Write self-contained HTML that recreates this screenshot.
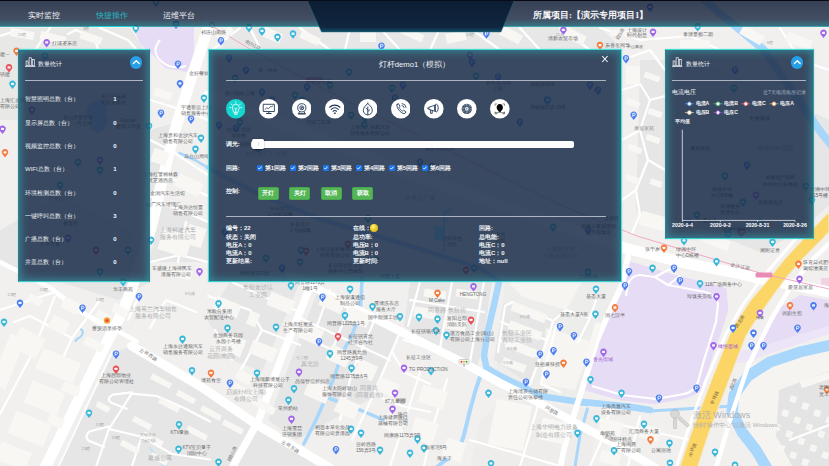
<!DOCTYPE html>
<html lang="zh"><head><meta charset="utf-8"><title>smart pole</title>
<style>
html,body{margin:0;padding:0;background:#f1f0ee;}
body{width:829px;height:466px;position:relative;overflow:hidden;font-family:"Liberation Sans",sans-serif;color:#fff;}
#map{position:absolute;left:0;top:0;}

.abs{position:absolute;}
#topbar{position:absolute;left:0;top:0;width:829px;height:27px;background:linear-gradient(180deg,rgba(18,30,56,.83) 0%,rgba(20,34,60,.79) 70%,rgba(24,100,118,.86) 100%);border-top:1px solid #05080f;box-sizing:border-box;}
#topline{position:absolute;left:0;top:26.4px;width:829px;height:1px;background:rgba(70,200,210,.55);}
#trap{position:absolute;left:0;top:0;}
.tab{position:absolute;top:9.5px;height:11px;line-height:11px;font-size:8.3px;color:#f1f3f6;white-space:nowrap;}
.tab.on{color:#25b9c2;}
#tabline{position:absolute;left:89px;top:25.8px;width:47px;height:1.4px;background:#19d3d3;}
#proj{position:absolute;left:533px;top:9.5px;height:11px;line-height:11px;font-size:8.85px;font-weight:bold;font-family:"Liberation Serif",serif;color:#f4f6f8;white-space:nowrap;}
.panel{position:absolute;box-sizing:border-box;background:rgba(26,44,72,.855);border-top:1.3px solid #46dcd6;border-bottom:1.3px solid #35cfcf;box-shadow:inset 0 0 8px 1.5px rgba(52,198,205,.5), 0 0 1.5px rgba(70,225,225,.6);}
#pl{left:18px;top:48.5px;width:132px;height:233.5px;border-left:1px solid rgba(50,170,180,.55);border-right:1px solid rgba(50,170,180,.45);}
#pc{left:208.4px;top:48.5px;width:414px;height:233.5px;border-left:1.5px solid #3fe3de;border-right:1.5px solid #43e6e0;}
#pr{left:664.6px;top:48.5px;width:149px;height:190.5px;border-left:1px solid rgba(50,170,180,.55);border-right:1px solid rgba(50,190,195,.7);}
.hr{position:absolute;height:1.1px;background:rgba(205,211,220,.78);}
.t6{position:absolute;font-size:6px;line-height:8px;height:8px;white-space:nowrap;color:#f4f6f9;}
.b{font-weight:bold;}
.ptitle{position:absolute;font-size:6px;line-height:8px;height:8px;white-space:nowrap;color:#f2f4f7;}
.up{position:absolute;width:12.6px;height:12.6px;border-radius:50%;background:#279fe6;}
.ic{position:absolute;width:19.6px;height:19.6px;top:99.2px;}
.ck{position:absolute;width:5.6px;height:5.6px;border-radius:1px;background:#1c74ea;top:165.2px;}
.ck svg{position:absolute;left:0;top:0;}
.gbtn{position:absolute;top:187.3px;width:21.3px;height:12.8px;border-radius:1.6px;background:#55b657;border:0.5px solid #49a64b;box-sizing:border-box;color:#fff;font-size:5.8px;line-height:11.8px;text-align:center;font-weight:bold;white-space:nowrap;}
.lg{position:absolute;font-size:5.2px;line-height:7px;height:7px;color:#f3f5f8;font-weight:bold;white-space:nowrap;}
.xl{position:absolute;font-size:5.2px;line-height:7px;height:7px;width:30px;text-align:center;color:#fff;font-weight:bold;white-space:nowrap;top:221.6px;}

</style></head><body>
<svg id="map" width="829" height="466" viewBox="0 0 829 466"><rect x="0" y="0" width="829" height="466" fill="#f1f0ee"/>
<polygon points="114,352 135,345 210,392 300,452 320,466 59,466" fill="#e6e6e6" />
<polygon points="60,196 130,230 150,282 118,300 60,282 0,262 0,230" fill="#e6e6e6" />
<polygon points="230,282 300,282 262,372 232,360 206,318" fill="#e6e6e6" />
<polygon points="318,290 400,332 372,398 296,440 268,420" fill="#e6e6e6" />
<polygon points="410,282 492,282 482,348 476,372 404,326" fill="#e6e6e6" />
<polygon points="505,282 618,282 580,398 528,392 496,372" fill="#ededeb" />
<polygon points="503,303 553,321 529,384 494,360" fill="#e6e6e6" />
<polygon points="546,328 592,342 575,390 540,384" fill="#f6f5f2" />
<polygon points="508,282 582,282 566,310 523,297" fill="#f6f5f2" />
<polygon points="150,130 178,122 165,175 150,215" fill="#e6e6e6" />
<polygon points="160,205 208,222 208,262 150,262" fill="#e6e6e6" />
<polygon points="636,210 700,228 760,252 800,232 829,205 829,120 700,60 640,60" fill="#e6e6e6" />
<polygon points="779,390 829,371 829,466 792,466 776,436" fill="#e4e4e4" />
<polygon points="748,366 829,338 829,371 779,390 776,436 792,466 770,466 745,430 738,400" fill="#f5f4f1" />
<polygon points="0,28 130,28 150,60 150,120 0,120" fill="#e8e8e7" />
<polygon points="228,27 600,27 622,49 222,49" fill="#e7e7e7" />
<polygon points="505,400 600,410 590,466 470,466 480,420" fill="#eeedeb" />
<polygon points="629.9,261.2 674.3,274.8 720.6,286.3 726.4,288.3 728.4,309.5 722.6,328.8 712.9,355.9 703.3,386.8 699.4,392.6 685.9,398.4 655,404.2 620.2,400.3 585.4,390.6 583.5,388.7 589.3,367.5 600.9,336.6 612.5,305.7 624,270.9" fill="#e6dcf5" />
<polygon points="135,30 138,27 194,27 194,62 186,72 165,68 155,57 140,44" fill="#e6dcf5" />
<polygon points="776,310 800,295 829,300 829,326 756,348 762,332" fill="#e6dcf5" />
<polygon points="821,278 829,278 829,286 821,286" fill="#f1d3e3" />
<polygon points="733,352 755,348 829,326 829,334 745,362 728,364" fill="#ece4f7" />
<polyline points="704,0 763,49 820,131 835,150" fill="none" stroke="#a9d6fb" stroke-width="8" stroke-linecap="round" stroke-linejoin="round" />
<polyline points="835,344 800,352 770,362 748,376 734,395 732,412 742,432 756,450 768,470" fill="none" stroke="#a9d6fb" stroke-width="11" stroke-linecap="round" stroke-linejoin="round" />
<polyline points="575,404 600,405 650,411 700,408 732,406" fill="none" stroke="#a9d6fb" stroke-width="3" stroke-linecap="round" stroke-linejoin="round" />
<polyline points="499,282 494,305 487.4,333 484,356 486.5,367.8 500,376 517.2,384.3 540.8,396.1 571.5,400.8 630,406.7 650,410" fill="none" stroke="#a9d6fb" stroke-width="6.5" stroke-linecap="round" stroke-linejoin="round" />
<polyline points="483,370 480.6,375 475,392 470,410.3 464,435 458,452 443,462 436,468" fill="none" stroke="#a9d6fb" stroke-width="4" stroke-linecap="round" stroke-linejoin="round" />
<polyline points="587.4,408.8 580,435 574.8,468" fill="none" stroke="#a9d6fb" stroke-width="3" stroke-linecap="round" stroke-linejoin="round" />
<polyline points="362,278 361,300 359.6,316 352,335 341.8,353.6 335,375 326.6,396 316,420 303.8,444" fill="none" stroke="#a9d6fb" stroke-width="3.5" stroke-linecap="round" stroke-linejoin="round" />
<polyline points="326,397 360,410 402.6,427.8" fill="none" stroke="#a9d6fb" stroke-width="3.5" stroke-linecap="round" stroke-linejoin="round" />
<polyline points="179.4,153 195,160 207.5,167.5" fill="none" stroke="#a9d6fb" stroke-width="2.5" stroke-linecap="round" stroke-linejoin="round" />
<polyline points="207.5,167.5 260,195 320,219 420,249 480,268 497,280" fill="none" stroke="#a9d6fb" stroke-width="4.5" stroke-linecap="round" stroke-linejoin="round" />
<path d="M92,104 L100,101 L106,106 L104,113 L107,120 L104,128 L97,132 L91,128 L92,120 L87,114 L88,108 Z" fill="#a9d6fb" stroke="#a9d6fb" stroke-width="2" stroke-linejoin="round"/>
<path d="M80.5,329 q3,1 2,5 q-1,3 -4,4 q-2,1 -3,3" fill="none" stroke="#a9d6fb" stroke-width="2.2" stroke-linecap="round"/>
<polyline points="150,448 160,462 170,470" fill="none" stroke="#bfe2fb" stroke-width="2" stroke-linecap="round" stroke-linejoin="round" />
<polyline points="0,310 53,292.7" fill="none" stroke="#ffffff" stroke-width="2.2" stroke-linecap="round" stroke-linejoin="round" />
<polyline points="54.7,296.7 33,352 0,414" fill="none" stroke="#ffffff" stroke-width="2.2" stroke-linecap="round" stroke-linejoin="round" />
<polyline points="57,295 110,330" fill="none" stroke="#ffffff" stroke-width="2.2" stroke-linecap="round" stroke-linejoin="round" />
<polyline points="14,322 30,316 72,338 62,360" fill="none" stroke="#ffffff" stroke-width="2.2" stroke-linecap="round" stroke-linejoin="round" />
<polyline points="72,338 100,300" fill="none" stroke="#ffffff" stroke-width="2.2" stroke-linecap="round" stroke-linejoin="round" />
<polyline points="86,316 108,330" fill="none" stroke="#ffffff" stroke-width="2.2" stroke-linecap="round" stroke-linejoin="round" />
<polyline points="150,328 166,300 196,312" fill="none" stroke="#ffffff" stroke-width="2.2" stroke-linecap="round" stroke-linejoin="round" />
<polyline points="139,296 128,320" fill="none" stroke="#ffffff" stroke-width="2.2" stroke-linecap="round" stroke-linejoin="round" />
<polyline points="131.7,393.6 157,396 184,408 210,421.5" fill="none" stroke="#ffffff" stroke-width="2.2" stroke-linecap="round" stroke-linejoin="round" />
<polyline points="131.7,393.6 108.9,429 96.3,466" fill="none" stroke="#ffffff" stroke-width="2.2" stroke-linecap="round" stroke-linejoin="round" />
<polyline points="108.9,429 141.8,436.7 172,454 210,459.5" fill="none" stroke="#ffffff" stroke-width="2.2" stroke-linecap="round" stroke-linejoin="round" />
<polyline points="141.8,436.7 132,466" fill="none" stroke="#ffffff" stroke-width="2.2" stroke-linecap="round" stroke-linejoin="round" />
<polyline points="208,296 250,310 262,330 240,372" fill="none" stroke="#ffffff" stroke-width="2.2" stroke-linecap="round" stroke-linejoin="round" />
<polyline points="262,330 300,345" fill="none" stroke="#ffffff" stroke-width="2.2" stroke-linecap="round" stroke-linejoin="round" />
<polyline points="215,330 232,360" fill="none" stroke="#ffffff" stroke-width="2.2" stroke-linecap="round" stroke-linejoin="round" />
<polyline points="232,282 262,296 300,312" fill="none" stroke="#ffffff" stroke-width="2.2" stroke-linecap="round" stroke-linejoin="round" />
<polyline points="330,290 312,340" fill="none" stroke="#ffffff" stroke-width="2.2" stroke-linecap="round" stroke-linejoin="round" />
<polyline points="352,300 330,356" fill="none" stroke="#ffffff" stroke-width="2.2" stroke-linecap="round" stroke-linejoin="round" />
<polyline points="378,312 352,372 340,420" fill="none" stroke="#ffffff" stroke-width="2.2" stroke-linecap="round" stroke-linejoin="round" />
<polyline points="300,318 390,360" fill="none" stroke="#ffffff" stroke-width="2.2" stroke-linecap="round" stroke-linejoin="round" />
<polyline points="322,345 372,368" fill="none" stroke="#ffffff" stroke-width="2.2" stroke-linecap="round" stroke-linejoin="round" />
<polyline points="400,332 372,398 352,440" fill="none" stroke="#ffffff" stroke-width="2.2" stroke-linecap="round" stroke-linejoin="round" />
<polyline points="392,352 404,372 430,384" fill="none" stroke="#ffffff" stroke-width="2.2" stroke-linecap="round" stroke-linejoin="round" />
<polyline points="382,398 402,406 430,412" fill="none" stroke="#ffffff" stroke-width="2.2" stroke-linecap="round" stroke-linejoin="round" />
<polyline points="420,282 408,326" fill="none" stroke="#ffffff" stroke-width="2.2" stroke-linecap="round" stroke-linejoin="round" />
<polyline points="452,282 440,348" fill="none" stroke="#ffffff" stroke-width="2.2" stroke-linecap="round" stroke-linejoin="round" />
<polyline points="484,282 470,362" fill="none" stroke="#ffffff" stroke-width="2.2" stroke-linecap="round" stroke-linejoin="round" />
<polyline points="410,300 484,312" fill="none" stroke="#ffffff" stroke-width="2.2" stroke-linecap="round" stroke-linejoin="round" />
<polyline points="404,340 470,362" fill="none" stroke="#ffffff" stroke-width="2.2" stroke-linecap="round" stroke-linejoin="round" />
<polyline points="498,352 505,306 512,302 553,321 548,338 530,384" fill="none" stroke="#ffffff" stroke-width="2.2" stroke-linecap="round" stroke-linejoin="round" />
<polyline points="501,322 546,340" fill="none" stroke="#ffffff" stroke-width="2.2" stroke-linecap="round" stroke-linejoin="round" />
<polyline points="499,340 540,357" fill="none" stroke="#ffffff" stroke-width="2.2" stroke-linecap="round" stroke-linejoin="round" />
<polyline points="553,321 566,310 590,318" fill="none" stroke="#ffffff" stroke-width="2.2" stroke-linecap="round" stroke-linejoin="round" />
<polyline points="556,326 541,384 560,392" fill="none" stroke="#ffffff" stroke-width="2.2" stroke-linecap="round" stroke-linejoin="round" />
<polyline points="596,300 590,318 578,342" fill="none" stroke="#ffffff" stroke-width="2.2" stroke-linecap="round" stroke-linejoin="round" />
<polyline points="420,372 405,420 390,466" fill="none" stroke="#ffffff" stroke-width="2.2" stroke-linecap="round" stroke-linejoin="round" />
<polyline points="447,380 432,430 424,466" fill="none" stroke="#ffffff" stroke-width="2.2" stroke-linecap="round" stroke-linejoin="round" />
<polyline points="540,398 528,440 520,466" fill="none" stroke="#ffffff" stroke-width="2.2" stroke-linecap="round" stroke-linejoin="round" />
<polyline points="600,444 590,466" fill="none" stroke="#ffffff" stroke-width="2.2" stroke-linecap="round" stroke-linejoin="round" />
<polyline points="610,410 600,444" fill="none" stroke="#ffffff" stroke-width="2.2" stroke-linecap="round" stroke-linejoin="round" />
<polyline points="640,416 628,466" fill="none" stroke="#ffffff" stroke-width="2.2" stroke-linecap="round" stroke-linejoin="round" />
<polyline points="598,420 690,440" fill="none" stroke="#ffffff" stroke-width="2.2" stroke-linecap="round" stroke-linejoin="round" />
<polyline points="470,440 560,466" fill="none" stroke="#ffffff" stroke-width="2.2" stroke-linecap="round" stroke-linejoin="round" />
<polyline points="0,36 18,30 30,34" fill="none" stroke="#ffffff" stroke-width="2.2" stroke-linecap="round" stroke-linejoin="round" />
<polyline points="50.7,27 36,49" fill="none" stroke="#ffffff" stroke-width="2.2" stroke-linecap="round" stroke-linejoin="round" />
<polyline points="68,34 76,30 94,38 98,49" fill="none" stroke="#ffffff" stroke-width="2.2" stroke-linecap="round" stroke-linejoin="round" />
<polyline points="100,28 128,40 136,49" fill="none" stroke="#ffffff" stroke-width="2.2" stroke-linecap="round" stroke-linejoin="round" />
<polyline points="212,50 240,28" fill="none" stroke="#ffffff" stroke-width="2.2" stroke-linecap="round" stroke-linejoin="round" />
<polyline points="250,28 262,52" fill="none" stroke="#ffffff" stroke-width="2.2" stroke-linecap="round" stroke-linejoin="round" />
<polyline points="300,28 330,50" fill="none" stroke="#ffffff" stroke-width="2.2" stroke-linecap="round" stroke-linejoin="round" />
<polyline points="350,28 345,50" fill="none" stroke="#ffffff" stroke-width="2.2" stroke-linecap="round" stroke-linejoin="round" />
<polyline points="380,28 400,50" fill="none" stroke="#ffffff" stroke-width="2.2" stroke-linecap="round" stroke-linejoin="round" />
<polyline points="440,28 430,50" fill="none" stroke="#ffffff" stroke-width="2.2" stroke-linecap="round" stroke-linejoin="round" />
<polyline points="470,28 500,50" fill="none" stroke="#ffffff" stroke-width="2.2" stroke-linecap="round" stroke-linejoin="round" />
<polyline points="520,28 540,50" fill="none" stroke="#ffffff" stroke-width="2.2" stroke-linecap="round" stroke-linejoin="round" />
<polyline points="560,28 590,50" fill="none" stroke="#ffffff" stroke-width="2.2" stroke-linecap="round" stroke-linejoin="round" />
<polyline points="600,28 640,40 690,36 720,50" fill="none" stroke="#ffffff" stroke-width="2.2" stroke-linecap="round" stroke-linejoin="round" />
<polyline points="622,60 650,50 665,70" fill="none" stroke="#ffffff" stroke-width="2.2" stroke-linecap="round" stroke-linejoin="round" />
<polyline points="780,28 800,60 829,70" fill="none" stroke="#ffffff" stroke-width="2.2" stroke-linecap="round" stroke-linejoin="round" />
<polyline points="150,100 176,108 208,120" fill="none" stroke="#ffffff" stroke-width="2.2" stroke-linecap="round" stroke-linejoin="round" />
<polyline points="150,140 170,150 208,175" fill="none" stroke="#ffffff" stroke-width="2.2" stroke-linecap="round" stroke-linejoin="round" />
<polyline points="150,196 180,210 208,222" fill="none" stroke="#ffffff" stroke-width="2.2" stroke-linecap="round" stroke-linejoin="round" />
<polyline points="165,175 208,196" fill="none" stroke="#ffffff" stroke-width="2.2" stroke-linecap="round" stroke-linejoin="round" />
<polyline points="150,262 180,255 208,262" fill="none" stroke="#ffffff" stroke-width="2.2" stroke-linecap="round" stroke-linejoin="round" />
<polyline points="186,222 178,262" fill="none" stroke="#ffffff" stroke-width="2.2" stroke-linecap="round" stroke-linejoin="round" />
<polyline points="622,90 640,84 650,100 640,130 648,160 636,190 640,215 632,233" fill="none" stroke="#ffffff" stroke-width="2.2" stroke-linecap="round" stroke-linejoin="round" />
<polyline points="650,100 665,96" fill="none" stroke="#ffffff" stroke-width="2.2" stroke-linecap="round" stroke-linejoin="round" />
<polyline points="648,160 665,170" fill="none" stroke="#ffffff" stroke-width="2.2" stroke-linecap="round" stroke-linejoin="round" />
<polyline points="622,140 640,130" fill="none" stroke="#ffffff" stroke-width="2.2" stroke-linecap="round" stroke-linejoin="round" />
<polyline points="622,200 636,190" fill="none" stroke="#ffffff" stroke-width="2.2" stroke-linecap="round" stroke-linejoin="round" />
<polyline points="790,440 829,425" fill="none" stroke="#ffffff" stroke-width="2.2" stroke-linecap="round" stroke-linejoin="round" />
<polyline points="208,27 204,40 191,79 175,130 161,185 152,225 132,288 122,313 104,348 45,468" fill="none" stroke="#ffffff" stroke-width="11" stroke-linecap="round" stroke-linejoin="round" />
<polyline points="112,352 58,468" fill="none" stroke="#ffffff" stroke-width="1.6" stroke-linecap="round" stroke-linejoin="round" />
<polyline points="0,262 50.7,288 83.6,313.6 114,328.8 136.8,341.5" fill="none" stroke="#ffffff" stroke-width="4.5" stroke-linecap="round" stroke-linejoin="round" />
<polyline points="131.7,346 200,386 255.7,424 311.5,457 330,468" fill="none" stroke="#ffffff" stroke-width="9" stroke-linecap="round" stroke-linejoin="round" />
<polyline points="312,282 284,351 258,421.5 232,468" fill="none" stroke="#ffffff" stroke-width="7.5" stroke-linecap="round" stroke-linejoin="round" />
<polyline points="290,275 310,285.4 370,316 408.6,335.6 464,363 500,383 529,397.3 571.5,420.9 611.6,442.1 630,452.8 656,468" fill="none" stroke="#ffffff" stroke-width="8.3" stroke-linecap="round" stroke-linejoin="round" />
<polyline points="628.6,254 622,285 610,310 597,340 585,380 572.3,420 565,445 560,468" fill="none" stroke="#ffffff" stroke-width="5.8" stroke-linecap="round" stroke-linejoin="round" />
<polyline points="208,96 300,130 400,170 520,212 625,248 637,251 688.6,263.9 740,273.7 757,278 783,283 835,293" fill="none" stroke="#ffffff" stroke-width="11" stroke-linecap="round" stroke-linejoin="round" />
<polyline points="835,238 810,262 790,288 772,318 748,366 730,420 716,468" fill="none" stroke="#ffffff" stroke-width="4.5" stroke-linecap="round" stroke-linejoin="round" />
<polyline points="798,236 762,278 742,306 726,334 706,380 688,430 676,468" fill="none" stroke="#ffffff" stroke-width="3" stroke-linecap="round" stroke-linejoin="round" />
<path d="M626,296 L628,284 Q631,276 640,275 L655,277 L668,285 L700,291 Q716,293 718,304 L716,322 L704,360 L698,382 Q694,392 684,394 L656,399 L622,395 L592,386" fill="none" stroke="#fff" stroke-width="2.2" stroke-linejoin="round"/>
<polyline points="655,277 672,268" fill="none" stroke="#ffffff" stroke-width="2" stroke-linecap="round" stroke-linejoin="round" />
<polyline points="668,285 680,276" fill="none" stroke="#ffffff" stroke-width="2" stroke-linecap="round" stroke-linejoin="round" />
<path d="M131.7,392.3 L113,394.6 Q105.5,398.7 111.4,402.7 L126.6,408.8 M108.9,426.5 L90,431.2 Q83.5,436.5 88.7,440.7 L103.9,446.8" fill="none" stroke="#fff" stroke-width="2.2" stroke-linecap="round"/>
<path d="M160,40 Q150,52 162,62 Q172,70 186,66" fill="none" stroke="#fff" stroke-width="2"/>
<polygon points="829,211.6 802,240.3 785.9,257.5 768.7,279 750.5,300.4 736.5,321.8 729,336 710.6,382 691.4,432.4 680,466 679,470 697,470 698,466 709,432.4 728.3,382 746,336 754.8,321.8 769.8,300.4 785.2,279 804,257.5 821.3,240.3 829,232" fill="#fbd566" stroke="#f3ead6" stroke-width="1.2" stroke-linejoin="round"/>
<polyline points="212,26 255.7,52.6 346.8,100.7 560,205 637,236 760,273 829,289" fill="none" stroke="#f0a0c0" stroke-width="0.9" stroke-linecap="round" stroke-linejoin="round" />
<rect x="755.5" y="272.6" width="17" height="4.8" rx="1.5" fill="#e98bb4"/>
<rect x="306" y="77" width="17" height="5" rx="1.5" fill="#e98bb4"/>
<rect x="37.8" y="354.9" width="40.5" height="21.6" rx="0.6" fill="#f8f7f4" transform="rotate(22 58.05 365.7)"/>
<rect x="27.1" y="386" width="35" height="24" rx="0.6" fill="#f8f7f4" transform="rotate(22 44.6 398)"/>
<rect x="10.7" y="417" width="38" height="24" rx="0.6" fill="#f8f7f4" transform="rotate(22 29.7 429)"/>
<rect x="-2.5" y="446.5" width="32" height="19" rx="0.6" fill="#f8f7f4" transform="rotate(22 13.5 456)"/>
<rect x="0" y="334.6" width="16" height="54" rx="0.6" fill="#f8f7f4" transform="rotate(22 8 361.6)"/>
<rect x="62" y="384" width="18" height="10" rx="0.6" fill="#f8f7f4" transform="rotate(22 71 389)"/>
<rect x="48" y="416" width="16" height="10" rx="0.6" fill="#f8f7f4" transform="rotate(22 56 421)"/>
<rect x="50" y="318" width="18" height="14" rx="0.6" fill="#f8f7f4" transform="rotate(28 59 325)"/>
<rect x="14" y="332" width="28" height="22" rx="0.6" fill="#f8f7f4" transform="rotate(28 28 343)"/>
<rect x="28" y="296" width="14" height="8" rx="0.6" fill="#f8f7f4" transform="rotate(28 35 300)"/>
<rect x="96" y="312" width="14" height="8" rx="0.6" fill="#f8f7f4" transform="rotate(28 103 316)"/>
<rect x="112" y="306" width="16" height="9" rx="0.6" fill="#f8f7f4" transform="rotate(28 120 310.5)"/>
<rect x="62" y="300" width="18" height="12" rx="0.6" fill="#f8f7f4" transform="rotate(28 71 306)"/>
<rect x="84" y="340" width="20" height="9" rx="0.6" fill="#f8f7f4" transform="rotate(28 94 344.5)"/>
<rect x="150" y="378" width="22" height="6" rx="0.6" fill="#f8f7f4" transform="rotate(28 161 381)"/>
<rect x="176" y="394" width="20" height="6" rx="0.6" fill="#f8f7f4" transform="rotate(28 186 397)"/>
<rect x="158" y="402" width="22" height="6" rx="0.6" fill="#f8f7f4" transform="rotate(28 169 405)"/>
<rect x="132" y="420" width="20" height="6" rx="0.6" fill="#f8f7f4" transform="rotate(28 142 423)"/>
<rect x="120" y="444" width="20" height="6" rx="0.6" fill="#f8f7f4" transform="rotate(28 130 447)"/>
<rect x="142" y="436" width="22" height="6" rx="0.6" fill="#f8f7f4" transform="rotate(28 153 439)"/>
<rect x="200" y="410" width="22" height="6" rx="0.6" fill="#f8f7f4" transform="rotate(28 211 413)"/>
<rect x="186" y="430" width="22" height="6" rx="0.6" fill="#f8f7f4" transform="rotate(28 197 433)"/>
<rect x="150" y="456" width="18" height="6" rx="0.6" fill="#f8f7f4" transform="rotate(28 159 459)"/>
<rect x="222" y="424" width="22" height="6" rx="0.6" fill="#f8f7f4" transform="rotate(28 233 427)"/>
<rect x="96" y="404" width="14" height="6" rx="0.6" fill="#f8f7f4" transform="rotate(28 103 407)"/>
<rect x="214" y="300" width="26" height="14" rx="0.6" fill="#f8f7f4" transform="rotate(22 227 307)"/>
<rect x="248" y="312" width="10" height="14" rx="0.6" fill="#f8f7f4" transform="rotate(22 253 319)"/>
<rect x="268" y="296" width="26" height="14" rx="0.6" fill="#f8f7f4" transform="rotate(22 281 303)"/>
<rect x="222" y="336" width="22" height="18" rx="0.6" fill="#f8f7f4" transform="rotate(22 233 345)"/>
<rect x="250" y="344" width="26" height="14" rx="0.6" fill="#f8f7f4" transform="rotate(22 263 351)"/>
<rect x="320" y="296" width="24" height="14" rx="0.6" fill="#f8f7f4" transform="rotate(24 332 303)"/>
<rect x="346" y="310" width="24" height="14" rx="0.6" fill="#f8f7f4" transform="rotate(24 358 317)"/>
<rect x="300" y="326" width="22" height="16" rx="0.6" fill="#f8f7f4" transform="rotate(24 311 334)"/>
<rect x="328" y="348" width="22" height="16" rx="0.6" fill="#f8f7f4" transform="rotate(24 339 356)"/>
<rect x="356" y="362" width="20" height="16" rx="0.6" fill="#f8f7f4" transform="rotate(24 366 370)"/>
<rect x="306" y="382" width="24" height="18" rx="0.6" fill="#f8f7f4" transform="rotate(24 318 391)"/>
<rect x="336" y="400" width="22" height="16" rx="0.6" fill="#f8f7f4" transform="rotate(24 347 408)"/>
<rect x="376" y="380" width="22" height="14" rx="0.6" fill="#f8f7f4" transform="rotate(24 387 387)"/>
<rect x="384" y="416" width="20" height="16" rx="0.6" fill="#f8f7f4" transform="rotate(24 394 424)"/>
<rect x="424" y="290" width="22" height="8" rx="0.6" fill="#f8f7f4" transform="rotate(8 435 294)"/>
<rect x="456" y="290" width="22" height="8" rx="0.6" fill="#f8f7f4" transform="rotate(8 467 294)"/>
<rect x="414" y="308" width="22" height="10" rx="0.6" fill="#f8f7f4" transform="rotate(8 425 313)"/>
<rect x="446" y="316" width="20" height="14" rx="0.6" fill="#f8f7f4" transform="rotate(8 456 323)"/>
<rect x="511" y="308" width="36" height="9" rx="0.6" fill="#f8f7f4" transform="rotate(21 529 312.5)"/>
<rect x="508" y="326" width="34" height="9" rx="0.6" fill="#f8f7f4" transform="rotate(21 525 330.5)"/>
<rect x="505" y="344" width="32" height="9" rx="0.6" fill="#f8f7f4" transform="rotate(21 521 348.5)"/>
<rect x="502" y="361" width="24" height="8" rx="0.6" fill="#f8f7f4" transform="rotate(21 514 365)"/>
<rect x="590" y="322" width="6" height="40" rx="0.6" fill="#f8f7f4" transform="rotate(16 593 342)"/>
<rect x="232" y="388" width="24" height="8" rx="0.6" fill="#f8f7f4" transform="rotate(30 244 392)"/>
<rect x="252" y="402" width="24" height="8" rx="0.6" fill="#f8f7f4" transform="rotate(30 264 406)"/>
<rect x="236" y="372" width="16" height="10" rx="0.6" fill="#f8f7f4" transform="rotate(30 244 377)"/>
<rect x="420" y="388" width="26" height="18" rx="0.6" fill="#f8f7f4" transform="rotate(18 433 397)"/>
<rect x="412" y="420" width="24" height="22" rx="0.6" fill="#f8f7f4" transform="rotate(18 424 431)"/>
<rect x="444" y="440" width="20" height="20" rx="0.6" fill="#f8f7f4" transform="rotate(18 454 450)"/>
<rect x="492" y="402" width="36" height="46" rx="0.6" fill="#f8f7f4" transform="rotate(12 510 425)"/>
<rect x="540" y="420" width="26" height="22" rx="0.6" fill="#f8f7f4" transform="rotate(12 553 431)"/>
<rect x="600" y="420" width="22" height="14" rx="0.6" fill="#f8f7f4" transform="rotate(14 611 427)"/>
<rect x="640" y="426" width="20" height="14" rx="0.6" fill="#f8f7f4" transform="rotate(14 650 433)"/>
<rect x="600" y="452" width="20" height="12" rx="0.6" fill="#f8f7f4" transform="rotate(14 610 458)"/>
<rect x="10" y="30" width="24" height="8" rx="0.6" fill="#f8f7f4" transform="rotate(10 22 34)"/>
<rect x="40" y="34" width="26" height="8" rx="0.6" fill="#f8f7f4" transform="rotate(14 53 38)"/>
<rect x="80" y="34" width="22" height="8" rx="0.6" fill="#f8f7f4" transform="rotate(18 91 38)"/>
<rect x="216" y="30" width="18" height="8" rx="0.6" fill="#f8f7f4" transform="rotate(-30 225 34)"/>
<rect x="262" y="30" width="20" height="10" rx="0.6" fill="#f8f7f4" transform="rotate(24 272 35)"/>
<rect x="300" y="34" width="20" height="8" rx="0.6" fill="#f8f7f4" transform="rotate(24 310 38)"/>
<rect x="360" y="30" width="16" height="12" rx="0.6" fill="#f8f7f4" transform="rotate(0 368 36)"/>
<rect x="400" y="30" width="24" height="8" rx="0.6" fill="#f8f7f4" transform="rotate(24 412 34)"/>
<rect x="446" y="32" width="20" height="10" rx="0.6" fill="#f8f7f4" transform="rotate(-12 456 37)"/>
<rect x="500" y="30" width="22" height="10" rx="0.6" fill="#f8f7f4" transform="rotate(28 511 35)"/>
<rect x="560" y="30" width="26" height="10" rx="0.6" fill="#f8f7f4" transform="rotate(28 573 35)"/>
<rect x="610" y="30" width="22" height="6" rx="0.6" fill="#f8f7f4" transform="rotate(0 621 33)"/>
<rect x="680" y="40" width="30" height="8" rx="0.6" fill="#f8f7f4" transform="rotate(0 695 44)"/>
<rect x="740" y="30" width="24" height="10" rx="0.6" fill="#f8f7f4" transform="rotate(30 752 35)"/>
<rect x="786" y="36" width="26" height="10" rx="0.6" fill="#f8f7f4" transform="rotate(20 799 41)"/>
<rect x="154" y="90" width="18" height="8" rx="0.6" fill="#f8f7f4" transform="rotate(18 163 94)"/>
<rect x="152" y="150" width="16" height="14" rx="0.6" fill="#f8f7f4" transform="rotate(18 160 157)"/>
<rect x="176" y="178" width="26" height="14" rx="0.6" fill="#f8f7f4" transform="rotate(26 189 185)"/>
<rect x="160" y="232" width="30" height="22" rx="0.6" fill="#f8f7f4" transform="rotate(18 175 243)"/>
<rect x="186" y="226" width="18" height="20" rx="0.6" fill="#f8f7f4" transform="rotate(18 195 236)"/>
<rect x="170" y="268" width="22" height="10" rx="0.6" fill="#f8f7f4" transform="rotate(18 181 273)"/>
<rect x="626" y="66" width="14" height="18" rx="0.6" fill="#f8f7f4" transform="rotate(0 633 75)"/>
<rect x="644" y="74" width="16" height="6" rx="0.6" fill="#f8f7f4" transform="rotate(20 652 77)"/>
<rect x="626" y="100" width="14" height="6" rx="0.6" fill="#f8f7f4" transform="rotate(20 633 103)"/>
<rect x="648" y="110" width="14" height="6" rx="0.6" fill="#f8f7f4" transform="rotate(20 655 113)"/>
<rect x="628" y="146" width="14" height="6" rx="0.6" fill="#f8f7f4" transform="rotate(20 635 149)"/>
<rect x="650" y="180" width="12" height="6" rx="0.6" fill="#f8f7f4" transform="rotate(20 656 183)"/>
<rect x="626" y="176" width="12" height="6" rx="0.6" fill="#f8f7f4" transform="rotate(20 632 179)"/>
<rect x="646" y="136" width="14" height="6" rx="0.6" fill="#f8f7f4" transform="rotate(20 653 139)"/>
<rect x="640" y="216" width="40" height="14" rx="0.6" fill="#f8f7f4" transform="rotate(16 660 223)"/>
<rect x="700" y="236" width="30" height="10" rx="0.6" fill="#f8f7f4" transform="rotate(22 715 241)"/>
<rect x="790" y="396" width="6.5" height="6.5" rx="0.6" fill="#f7f6f3" transform="rotate(20 793.25 399.25)"/>
<rect x="802" y="403" width="6.5" height="6.5" rx="0.6" fill="#f7f6f3" transform="rotate(20 805.25 406.25)"/>
<rect x="814" y="410" width="6.5" height="6.5" rx="0.6" fill="#f7f6f3" transform="rotate(20 817.25 413.25)"/>
<rect x="826" y="417" width="6.5" height="6.5" rx="0.6" fill="#f7f6f3" transform="rotate(20 829.25 420.25)"/>
<rect x="782" y="410" width="6.5" height="6.5" rx="0.6" fill="#f7f6f3" transform="rotate(20 785.25 413.25)"/>
<rect x="794" y="417" width="6.5" height="6.5" rx="0.6" fill="#f7f6f3" transform="rotate(20 797.25 420.25)"/>
<rect x="806" y="424" width="6.5" height="6.5" rx="0.6" fill="#f7f6f3" transform="rotate(20 809.25 427.25)"/>
<rect x="818" y="431" width="6.5" height="6.5" rx="0.6" fill="#f7f6f3" transform="rotate(20 821.25 434.25)"/>
<rect x="774" y="424" width="6.5" height="6.5" rx="0.6" fill="#f7f6f3" transform="rotate(20 777.25 427.25)"/>
<rect x="786" y="431" width="6.5" height="6.5" rx="0.6" fill="#f7f6f3" transform="rotate(20 789.25 434.25)"/>
<rect x="798" y="438" width="6.5" height="6.5" rx="0.6" fill="#f7f6f3" transform="rotate(20 801.25 441.25)"/>
<rect x="810" y="445" width="6.5" height="6.5" rx="0.6" fill="#f7f6f3" transform="rotate(20 813.25 448.25)"/>
<rect x="822" y="452" width="6.5" height="6.5" rx="0.6" fill="#f7f6f3" transform="rotate(20 825.25 455.25)"/>
<rect x="778" y="445" width="6.5" height="6.5" rx="0.6" fill="#f7f6f3" transform="rotate(20 781.25 448.25)"/>
<rect x="790" y="452" width="6.5" height="6.5" rx="0.6" fill="#f7f6f3" transform="rotate(20 793.25 455.25)"/>
<rect x="802" y="459" width="6.5" height="6.5" rx="0.6" fill="#f7f6f3" transform="rotate(20 805.25 462.25)"/>
<rect x="800" y="376" width="34" height="7" rx="0.6" fill="#f7f6f3" transform="rotate(-18 817 379.5)"/>
<g transform="translate(139 296.5)"><path d="M0,5 L-2,2.4 A3.3,3.3 0 1 1 2,2.4 Z" fill="#4a7df0"/><path d="M-0.9,1.8 V-1.8 H0.5 A1.1,1.1 0 0 1 0.5,0.4 H-0.9" fill="none" stroke="#fff" stroke-width="0.8"/></g>
<g transform="translate(82.5 308)"><path d="M0,5 L-2,2.4 A3.3,3.3 0 1 1 2,2.4 Z" fill="#4a7df0"/><path d="M-0.9,1.8 V-1.8 H0.5 A1.1,1.1 0 0 1 0.5,0.4 H-0.9" fill="none" stroke="#fff" stroke-width="0.8"/></g>
<g transform="translate(116 354)"><path d="M0,5 L-2,2.4 A3.3,3.3 0 1 1 2,2.4 Z" fill="#4a7df0"/><path d="M-0.9,1.8 V-1.8 H0.5 A1.1,1.1 0 0 1 0.5,0.4 H-0.9" fill="none" stroke="#fff" stroke-width="0.8"/></g>
<g transform="translate(230 383)"><path d="M0,5 L-2,2.4 A3.3,3.3 0 1 1 2,2.4 Z" fill="#4a7df0"/><path d="M-0.9,1.8 V-1.8 H0.5 A1.1,1.1 0 0 1 0.5,0.4 H-0.9" fill="none" stroke="#fff" stroke-width="0.8"/></g>
<g transform="translate(322.5 297)"><path d="M0,5 L-2,2.4 A3.3,3.3 0 1 1 2,2.4 Z" fill="#4a7df0"/><path d="M-0.9,1.8 V-1.8 H0.5 A1.1,1.1 0 0 1 0.5,0.4 H-0.9" fill="none" stroke="#fff" stroke-width="0.8"/></g>
<g transform="translate(319 341.5)"><path d="M0,5 L-2,2.4 A3.3,3.3 0 1 1 2,2.4 Z" fill="#4a7df0"/><path d="M-0.9,1.8 V-1.8 H0.5 A1.1,1.1 0 0 1 0.5,0.4 H-0.9" fill="none" stroke="#fff" stroke-width="0.8"/></g>
<g transform="translate(336 449.5)"><path d="M0,5 L-2,2.4 A3.3,3.3 0 1 1 2,2.4 Z" fill="#4a7df0"/><path d="M-0.9,1.8 V-1.8 H0.5 A1.1,1.1 0 0 1 0.5,0.4 H-0.9" fill="none" stroke="#fff" stroke-width="0.8"/></g>
<g transform="translate(629 271.5)"><path d="M0,5 L-2,2.4 A3.3,3.3 0 1 1 2,2.4 Z" fill="#4a7df0"/><path d="M-0.9,1.8 V-1.8 H0.5 A1.1,1.1 0 0 1 0.5,0.4 H-0.9" fill="none" stroke="#fff" stroke-width="0.8"/></g>
<g transform="translate(674 268)"><path d="M0,5 L-2,2.4 A3.3,3.3 0 1 1 2,2.4 Z" fill="#4a7df0"/><path d="M-0.9,1.8 V-1.8 H0.5 A1.1,1.1 0 0 1 0.5,0.4 H-0.9" fill="none" stroke="#fff" stroke-width="0.8"/></g>
<g transform="translate(625 285.5)"><path d="M0,5 L-2,2.4 A3.3,3.3 0 1 1 2,2.4 Z" fill="#4a7df0"/><path d="M-0.9,1.8 V-1.8 H0.5 A1.1,1.1 0 0 1 0.5,0.4 H-0.9" fill="none" stroke="#fff" stroke-width="0.8"/></g>
<g transform="translate(680 280.5)"><path d="M0,5 L-2,2.4 A3.3,3.3 0 1 1 2,2.4 Z" fill="#4a7df0"/><path d="M-0.9,1.8 V-1.8 H0.5 A1.1,1.1 0 0 1 0.5,0.4 H-0.9" fill="none" stroke="#fff" stroke-width="0.8"/></g>
<g transform="translate(797.5 328)"><path d="M0,5 L-2,2.4 A3.3,3.3 0 1 1 2,2.4 Z" fill="#4a7df0"/><path d="M-0.9,1.8 V-1.8 H0.5 A1.1,1.1 0 0 1 0.5,0.4 H-0.9" fill="none" stroke="#fff" stroke-width="0.8"/></g>
<g transform="translate(751.5 345.5)"><path d="M0,5 L-2,2.4 A3.3,3.3 0 1 1 2,2.4 Z" fill="#4a7df0"/><path d="M-0.9,1.8 V-1.8 H0.5 A1.1,1.1 0 0 1 0.5,0.4 H-0.9" fill="none" stroke="#fff" stroke-width="0.8"/></g>
<g transform="translate(763.5 345.5)"><path d="M0,5 L-2,2.4 A3.3,3.3 0 1 1 2,2.4 Z" fill="#4a7df0"/><path d="M-0.9,1.8 V-1.8 H0.5 A1.1,1.1 0 0 1 0.5,0.4 H-0.9" fill="none" stroke="#fff" stroke-width="0.8"/></g>
<g transform="translate(560 326.5)"><path d="M0,5 L-2,2.4 A3.3,3.3 0 1 1 2,2.4 Z" fill="#4a7df0"/><path d="M-0.9,1.8 V-1.8 H0.5 A1.1,1.1 0 0 1 0.5,0.4 H-0.9" fill="none" stroke="#fff" stroke-width="0.8"/></g>
<g transform="translate(574 335.5)"><path d="M0,5 L-2,2.4 A3.3,3.3 0 1 1 2,2.4 Z" fill="#4a7df0"/><path d="M-0.9,1.8 V-1.8 H0.5 A1.1,1.1 0 0 1 0.5,0.4 H-0.9" fill="none" stroke="#fff" stroke-width="0.8"/></g>
<g transform="translate(553.5 350.5)"><path d="M0,5 L-2,2.4 A3.3,3.3 0 1 1 2,2.4 Z" fill="#4a7df0"/><path d="M-0.9,1.8 V-1.8 H0.5 A1.1,1.1 0 0 1 0.5,0.4 H-0.9" fill="none" stroke="#fff" stroke-width="0.8"/></g>
<g transform="translate(540 354)"><path d="M0,5 L-2,2.4 A3.3,3.3 0 1 1 2,2.4 Z" fill="#4a7df0"/><path d="M-0.9,1.8 V-1.8 H0.5 A1.1,1.1 0 0 1 0.5,0.4 H-0.9" fill="none" stroke="#fff" stroke-width="0.8"/></g>
<g transform="translate(546.5 374)"><path d="M0,5 L-2,2.4 A3.3,3.3 0 1 1 2,2.4 Z" fill="#4a7df0"/><path d="M-0.9,1.8 V-1.8 H0.5 A1.1,1.1 0 0 1 0.5,0.4 H-0.9" fill="none" stroke="#fff" stroke-width="0.8"/></g>
<g transform="translate(526 382)"><path d="M0,5 L-2,2.4 A3.3,3.3 0 1 1 2,2.4 Z" fill="#4a7df0"/><path d="M-0.9,1.8 V-1.8 H0.5 A1.1,1.1 0 0 1 0.5,0.4 H-0.9" fill="none" stroke="#fff" stroke-width="0.8"/></g>
<g transform="translate(586.5 362)"><path d="M0,5 L-2,2.4 A3.3,3.3 0 1 1 2,2.4 Z" fill="#4a7df0"/><path d="M-0.9,1.8 V-1.8 H0.5 A1.1,1.1 0 0 1 0.5,0.4 H-0.9" fill="none" stroke="#fff" stroke-width="0.8"/></g>
<g transform="translate(659 398)"><path d="M0,5 L-2,2.4 A3.3,3.3 0 1 1 2,2.4 Z" fill="#4a7df0"/><path d="M-0.9,1.8 V-1.8 H0.5 A1.1,1.1 0 0 1 0.5,0.4 H-0.9" fill="none" stroke="#fff" stroke-width="0.8"/></g>
<g transform="translate(696.5 388)"><path d="M0,5 L-2,2.4 A3.3,3.3 0 1 1 2,2.4 Z" fill="#4a7df0"/><path d="M-0.9,1.8 V-1.8 H0.5 A1.1,1.1 0 0 1 0.5,0.4 H-0.9" fill="none" stroke="#fff" stroke-width="0.8"/></g>
<g transform="translate(178 64)"><path d="M0,5 L-2,2.4 A3.3,3.3 0 1 1 2,2.4 Z" fill="#4a7df0"/><path d="M-0.9,1.8 V-1.8 H0.5 A1.1,1.1 0 0 1 0.5,0.4 H-0.9" fill="none" stroke="#fff" stroke-width="0.8"/></g>
<g transform="translate(161 113)"><path d="M0,5 L-2,2.4 A3.3,3.3 0 1 1 2,2.4 Z" fill="#4a7df0"/><path d="M-0.9,1.8 V-1.8 H0.5 A1.1,1.1 0 0 1 0.5,0.4 H-0.9" fill="none" stroke="#fff" stroke-width="0.8"/></g>
<g transform="translate(191 119)"><path d="M0,5 L-2,2.4 A3.3,3.3 0 1 1 2,2.4 Z" fill="#4a7df0"/><path d="M-0.9,1.8 V-1.8 H0.5 A1.1,1.1 0 0 1 0.5,0.4 H-0.9" fill="none" stroke="#fff" stroke-width="0.8"/></g>
<g transform="translate(221 40.6)"><path d="M0,5 L-2,2.4 A3.3,3.3 0 1 1 2,2.4 Z" fill="#4a7df0"/><path d="M-0.9,1.8 V-1.8 H0.5 A1.1,1.1 0 0 1 0.5,0.4 H-0.9" fill="none" stroke="#fff" stroke-width="0.8"/></g>
<g transform="translate(633.7 115)"><path d="M0,5 L-2,2.4 A3.3,3.3 0 1 1 2,2.4 Z" fill="#4a7df0"/><path d="M-0.9,1.8 V-1.8 H0.5 A1.1,1.1 0 0 1 0.5,0.4 H-0.9" fill="none" stroke="#fff" stroke-width="0.8"/></g>
<g transform="translate(626 58.5)"><path d="M0,5 L-2,2.4 A3.3,3.3 0 1 1 2,2.4 Z" fill="#4a7df0"/><path d="M-0.9,1.8 V-1.8 H0.5 A1.1,1.1 0 0 1 0.5,0.4 H-0.9" fill="none" stroke="#fff" stroke-width="0.8"/></g>
<g transform="translate(381.5 46)"><path d="M0,5 L-2,2.4 A3.3,3.3 0 1 1 2,2.4 Z" fill="#4a7df0"/><path d="M-0.9,1.8 V-1.8 H0.5 A1.1,1.1 0 0 1 0.5,0.4 H-0.9" fill="none" stroke="#fff" stroke-width="0.8"/></g>
<g transform="translate(486.4 33.8)"><path d="M0,5 L-2,2.4 A3.3,3.3 0 1 1 2,2.4 Z" fill="#4a7df0"/><path d="M-0.9,1.8 V-1.8 H0.5 A1.1,1.1 0 0 1 0.5,0.4 H-0.9" fill="none" stroke="#fff" stroke-width="0.8"/></g>
<g transform="translate(246 70)"><path d="M0,5 L-2,2.4 A3.3,3.3 0 1 1 2,2.4 Z" fill="#4a7df0"/><path d="M-0.9,1.8 V-1.8 H0.5 A1.1,1.1 0 0 1 0.5,0.4 H-0.9" fill="none" stroke="#fff" stroke-width="0.8"/></g>
<g transform="translate(229 58)"><path d="M0,5 L-2,2.4 A3.3,3.3 0 1 1 2,2.4 Z" fill="#4a7df0"/><path d="M-0.9,1.8 V-1.8 H0.5 A1.1,1.1 0 0 1 0.5,0.4 H-0.9" fill="none" stroke="#fff" stroke-width="0.8"/></g>
<g transform="translate(262 92)"><path d="M0,5 L-2,2.4 A3.3,3.3 0 1 1 2,2.4 Z" fill="#4a7df0"/><path d="M-0.9,1.8 V-1.8 H0.5 A1.1,1.1 0 0 1 0.5,0.4 H-0.9" fill="none" stroke="#fff" stroke-width="0.8"/></g>
<g transform="translate(307 87)"><path d="M0,5 L-2,2.4 A3.3,3.3 0 1 1 2,2.4 Z" fill="#4a7df0"/><path d="M-0.9,1.8 V-1.8 H0.5 A1.1,1.1 0 0 1 0.5,0.4 H-0.9" fill="none" stroke="#fff" stroke-width="0.8"/></g>
<g transform="translate(403 85)"><path d="M0,5 L-2,2.4 A3.3,3.3 0 1 1 2,2.4 Z" fill="#4a7df0"/><path d="M-0.9,1.8 V-1.8 H0.5 A1.1,1.1 0 0 1 0.5,0.4 H-0.9" fill="none" stroke="#fff" stroke-width="0.8"/></g>
<g transform="translate(236 128)"><path d="M0,5 L-2,2.4 A3.3,3.3 0 1 1 2,2.4 Z" fill="#4a7df0"/><path d="M-0.9,1.8 V-1.8 H0.5 A1.1,1.1 0 0 1 0.5,0.4 H-0.9" fill="none" stroke="#fff" stroke-width="0.8"/></g>
<g transform="translate(219 125)"><path d="M0,5 L-2,2.4 A3.3,3.3 0 1 1 2,2.4 Z" fill="#4a7df0"/><path d="M-0.9,1.8 V-1.8 H0.5 A1.1,1.1 0 0 1 0.5,0.4 H-0.9" fill="none" stroke="#fff" stroke-width="0.8"/></g>
<g transform="translate(272 100)"><path d="M0,5 L-2,2.4 A3.3,3.3 0 1 1 2,2.4 Z" fill="#4a7df0"/><path d="M-0.9,1.8 V-1.8 H0.5 A1.1,1.1 0 0 1 0.5,0.4 H-0.9" fill="none" stroke="#fff" stroke-width="0.8"/></g>
<g transform="translate(395 98)"><path d="M0,5 L-2,2.4 A3.3,3.3 0 1 1 2,2.4 Z" fill="#4a7df0"/><path d="M-0.9,1.8 V-1.8 H0.5 A1.1,1.1 0 0 1 0.5,0.4 H-0.9" fill="none" stroke="#fff" stroke-width="0.8"/></g>
<g transform="translate(520 122)"><path d="M0,5 L-2,2.4 A3.3,3.3 0 1 1 2,2.4 Z" fill="#4a7df0"/><path d="M-0.9,1.8 V-1.8 H0.5 A1.1,1.1 0 0 1 0.5,0.4 H-0.9" fill="none" stroke="#fff" stroke-width="0.8"/></g>
<g transform="translate(590 85)"><path d="M0,5 L-2,2.4 A3.3,3.3 0 1 1 2,2.4 Z" fill="#4a7df0"/><path d="M-0.9,1.8 V-1.8 H0.5 A1.1,1.1 0 0 1 0.5,0.4 H-0.9" fill="none" stroke="#fff" stroke-width="0.8"/></g>
<g transform="translate(598 90)"><path d="M0,5 L-2,2.4 A3.3,3.3 0 1 1 2,2.4 Z" fill="#4a7df0"/><path d="M-0.9,1.8 V-1.8 H0.5 A1.1,1.1 0 0 1 0.5,0.4 H-0.9" fill="none" stroke="#fff" stroke-width="0.8"/></g>
<g transform="translate(472 62)"><path d="M0,5 L-2,2.4 A3.3,3.3 0 1 1 2,2.4 Z" fill="#4a7df0"/><path d="M-0.9,1.8 V-1.8 H0.5 A1.1,1.1 0 0 1 0.5,0.4 H-0.9" fill="none" stroke="#fff" stroke-width="0.8"/></g>
<g transform="translate(498 77)"><path d="M0,5 L-2,2.4 A3.3,3.3 0 1 1 2,2.4 Z" fill="#4a7df0"/><path d="M-0.9,1.8 V-1.8 H0.5 A1.1,1.1 0 0 1 0.5,0.4 H-0.9" fill="none" stroke="#fff" stroke-width="0.8"/></g>
<g transform="translate(547 100)"><path d="M0,5 L-2,2.4 A3.3,3.3 0 1 1 2,2.4 Z" fill="#4a7df0"/><path d="M-0.9,1.8 V-1.8 H0.5 A1.1,1.1 0 0 1 0.5,0.4 H-0.9" fill="none" stroke="#fff" stroke-width="0.8"/></g>
<g transform="translate(420 162)"><path d="M0,5 L-2,2.4 A3.3,3.3 0 1 1 2,2.4 Z" fill="#4a7df0"/><path d="M-0.9,1.8 V-1.8 H0.5 A1.1,1.1 0 0 1 0.5,0.4 H-0.9" fill="none" stroke="#fff" stroke-width="0.8"/></g>
<g transform="translate(432 166)"><path d="M0,5 L-2,2.4 A3.3,3.3 0 1 1 2,2.4 Z" fill="#4a7df0"/><path d="M-0.9,1.8 V-1.8 H0.5 A1.1,1.1 0 0 1 0.5,0.4 H-0.9" fill="none" stroke="#fff" stroke-width="0.8"/></g>
<g transform="translate(225 232)"><path d="M0,5 L-2,2.4 A3.3,3.3 0 1 1 2,2.4 Z" fill="#4a7df0"/><path d="M-0.9,1.8 V-1.8 H0.5 A1.1,1.1 0 0 1 0.5,0.4 H-0.9" fill="none" stroke="#fff" stroke-width="0.8"/></g>
<g transform="translate(282 268)"><path d="M0,5 L-2,2.4 A3.3,3.3 0 1 1 2,2.4 Z" fill="#4a7df0"/><path d="M-0.9,1.8 V-1.8 H0.5 A1.1,1.1 0 0 1 0.5,0.4 H-0.9" fill="none" stroke="#fff" stroke-width="0.8"/></g>
<g transform="translate(588 230)"><path d="M0,5 L-2,2.4 A3.3,3.3 0 1 1 2,2.4 Z" fill="#4a7df0"/><path d="M-0.9,1.8 V-1.8 H0.5 A1.1,1.1 0 0 1 0.5,0.4 H-0.9" fill="none" stroke="#fff" stroke-width="0.8"/></g>
<g transform="translate(735 70)"><path d="M0,5 L-2,2.4 A3.3,3.3 0 1 1 2,2.4 Z" fill="#4a7df0"/><path d="M-0.9,1.8 V-1.8 H0.5 A1.1,1.1 0 0 1 0.5,0.4 H-0.9" fill="none" stroke="#fff" stroke-width="0.8"/></g>
<g transform="translate(747 165)"><path d="M0,5 L-2,2.4 A3.3,3.3 0 1 1 2,2.4 Z" fill="#4a7df0"/><path d="M-0.9,1.8 V-1.8 H0.5 A1.1,1.1 0 0 1 0.5,0.4 H-0.9" fill="none" stroke="#fff" stroke-width="0.8"/></g>
<g transform="translate(688 222)"><path d="M0,5 L-2,2.4 A3.3,3.3 0 1 1 2,2.4 Z" fill="#4a7df0"/><path d="M-0.9,1.8 V-1.8 H0.5 A1.1,1.1 0 0 1 0.5,0.4 H-0.9" fill="none" stroke="#fff" stroke-width="0.8"/></g>
<g transform="translate(20 303)"><path d="M0,5 L-2,2.4 A3.3,3.3 0 1 1 2,2.4 Z" fill="#4a7df0"/><rect x="-1.5" y="-1.3" width="3" height="2.4" rx="0.5" fill="#fff" opacity="0.92"/></g>
<g transform="translate(180 83.5)"><path d="M0,5 L-2,2.4 A3.3,3.3 0 1 1 2,2.4 Z" fill="#4a7df0"/><rect x="-1.5" y="-1.3" width="3" height="2.4" rx="0.5" fill="#fff" opacity="0.92"/></g>
<g transform="translate(813.5 305.5)"><path d="M0,5 L-2,2.4 A3.3,3.3 0 1 1 2,2.4 Z" fill="#4a7df0"/><rect x="-1.5" y="-1.3" width="3" height="2.4" rx="0.5" fill="#fff" opacity="0.92"/></g>
<g transform="translate(753.5 333)"><path d="M0,5 L-2,2.4 A3.3,3.3 0 1 1 2,2.4 Z" fill="#4a7df0"/><rect x="-1.5" y="-1.3" width="3" height="2.4" rx="0.5" fill="#fff" opacity="0.92"/></g>
<g transform="translate(733 328)"><path d="M0,5 L-2,2.4 A3.3,3.3 0 1 1 2,2.4 Z" fill="#4a7df0"/><rect x="-1.5" y="-1.3" width="3" height="2.4" rx="0.5" fill="#fff" opacity="0.92"/></g>
<g transform="translate(176 24)"><path d="M0,5 L-2,2.4 A3.3,3.3 0 1 1 2,2.4 Z" fill="#4a7df0"/><rect x="-1.5" y="-1.3" width="3" height="2.4" rx="0.5" fill="#fff" opacity="0.92"/></g>
<g transform="translate(650 7)"><path d="M0,5 L-2,2.4 A3.3,3.3 0 1 1 2,2.4 Z" fill="#4a7df0"/><rect x="-1.5" y="-1.3" width="3" height="2.4" rx="0.5" fill="#fff" opacity="0.92"/></g>
<g transform="translate(4 322)"><path d="M0,5 L-2,2.4 A3.3,3.3 0 1 1 2,2.4 Z" fill="#3bb7d9"/><rect x="-1.5" y="-1.3" width="3" height="2.4" rx="0.5" fill="#fff" opacity="0.92"/></g>
<g transform="translate(89 413)"><path d="M0,5 L-2,2.4 A3.3,3.3 0 1 1 2,2.4 Z" fill="#3bb7d9"/><rect x="-1.5" y="-1.3" width="3" height="2.4" rx="0.5" fill="#fff" opacity="0.92"/></g>
<g transform="translate(179 424.5)"><path d="M0,5 L-2,2.4 A3.3,3.3 0 1 1 2,2.4 Z" fill="#3bb7d9"/><rect x="-1.5" y="-1.3" width="3" height="2.4" rx="0.5" fill="#fff" opacity="0.92"/></g>
<g transform="translate(178.5 449)"><path d="M0,5 L-2,2.4 A3.3,3.3 0 1 1 2,2.4 Z" fill="#3bb7d9"/><rect x="-1.5" y="-1.3" width="3" height="2.4" rx="0.5" fill="#fff" opacity="0.92"/></g>
<g transform="translate(182.5 339)"><path d="M0,5 L-2,2.4 A3.3,3.3 0 1 1 2,2.4 Z" fill="#3bb7d9"/><rect x="-1.5" y="-1.3" width="3" height="2.4" rx="0.5" fill="#fff" opacity="0.92"/></g>
<g transform="translate(123.2 281.5)"><path d="M0,5 L-2,2.4 A3.3,3.3 0 1 1 2,2.4 Z" fill="#3bb7d9"/><rect x="-1.5" y="-1.3" width="3" height="2.4" rx="0.5" fill="#fff" opacity="0.92"/></g>
<g transform="translate(218.5 303.5)"><path d="M0,5 L-2,2.4 A3.3,3.3 0 1 1 2,2.4 Z" fill="#3bb7d9"/><rect x="-1.5" y="-1.3" width="3" height="2.4" rx="0.5" fill="#fff" opacity="0.92"/></g>
<g transform="translate(227.5 328)"><path d="M0,5 L-2,2.4 A3.3,3.3 0 1 1 2,2.4 Z" fill="#3bb7d9"/><rect x="-1.5" y="-1.3" width="3" height="2.4" rx="0.5" fill="#fff" opacity="0.92"/></g>
<g transform="translate(192 370.5)"><path d="M0,5 L-2,2.4 A3.3,3.3 0 1 1 2,2.4 Z" fill="#3bb7d9"/><rect x="-1.5" y="-1.3" width="3" height="2.4" rx="0.5" fill="#fff" opacity="0.92"/></g>
<g transform="translate(257 373)"><path d="M0,5 L-2,2.4 A3.3,3.3 0 1 1 2,2.4 Z" fill="#3bb7d9"/><rect x="-1.5" y="-1.3" width="3" height="2.4" rx="0.5" fill="#fff" opacity="0.92"/></g>
<g transform="translate(276 327)"><path d="M0,5 L-2,2.4 A3.3,3.3 0 1 1 2,2.4 Z" fill="#3bb7d9"/><rect x="-1.5" y="-1.3" width="3" height="2.4" rx="0.5" fill="#fff" opacity="0.92"/></g>
<g transform="translate(291 285.5)"><path d="M0,5 L-2,2.4 A3.3,3.3 0 1 1 2,2.4 Z" fill="#3bb7d9"/><rect x="-1.5" y="-1.3" width="3" height="2.4" rx="0.5" fill="#fff" opacity="0.92"/></g>
<g transform="translate(350 289)"><path d="M0,5 L-2,2.4 A3.3,3.3 0 1 1 2,2.4 Z" fill="#3bb7d9"/><rect x="-1.5" y="-1.3" width="3" height="2.4" rx="0.5" fill="#fff" opacity="0.92"/></g>
<g transform="translate(345 315.5)"><path d="M0,5 L-2,2.4 A3.3,3.3 0 1 1 2,2.4 Z" fill="#3bb7d9"/><rect x="-1.5" y="-1.3" width="3" height="2.4" rx="0.5" fill="#fff" opacity="0.92"/></g>
<g transform="translate(372.5 306.5)"><path d="M0,5 L-2,2.4 A3.3,3.3 0 1 1 2,2.4 Z" fill="#3bb7d9"/><rect x="-1.5" y="-1.3" width="3" height="2.4" rx="0.5" fill="#fff" opacity="0.92"/></g>
<g transform="translate(400 316.5)"><path d="M0,5 L-2,2.4 A3.3,3.3 0 1 1 2,2.4 Z" fill="#3bb7d9"/><rect x="-1.5" y="-1.3" width="3" height="2.4" rx="0.5" fill="#fff" opacity="0.92"/></g>
<g transform="translate(330 353.5)"><path d="M0,5 L-2,2.4 A3.3,3.3 0 1 1 2,2.4 Z" fill="#3bb7d9"/><rect x="-1.5" y="-1.3" width="3" height="2.4" rx="0.5" fill="#fff" opacity="0.92"/></g>
<g transform="translate(351.5 368)"><path d="M0,5 L-2,2.4 A3.3,3.3 0 1 1 2,2.4 Z" fill="#3bb7d9"/><rect x="-1.5" y="-1.3" width="3" height="2.4" rx="0.5" fill="#fff" opacity="0.92"/></g>
<g transform="translate(294 388.5)"><path d="M0,5 L-2,2.4 A3.3,3.3 0 1 1 2,2.4 Z" fill="#3bb7d9"/><rect x="-1.5" y="-1.3" width="3" height="2.4" rx="0.5" fill="#fff" opacity="0.92"/></g>
<g transform="translate(288.5 400)"><path d="M0,5 L-2,2.4 A3.3,3.3 0 1 1 2,2.4 Z" fill="#3bb7d9"/><rect x="-1.5" y="-1.3" width="3" height="2.4" rx="0.5" fill="#fff" opacity="0.92"/></g>
<g transform="translate(351 429)"><path d="M0,5 L-2,2.4 A3.3,3.3 0 1 1 2,2.4 Z" fill="#3bb7d9"/><rect x="-1.5" y="-1.3" width="3" height="2.4" rx="0.5" fill="#fff" opacity="0.92"/></g>
<g transform="translate(361 433)"><path d="M0,5 L-2,2.4 A3.3,3.3 0 1 1 2,2.4 Z" fill="#3bb7d9"/><rect x="-1.5" y="-1.3" width="3" height="2.4" rx="0.5" fill="#fff" opacity="0.92"/></g>
<g transform="translate(380 450)"><path d="M0,5 L-2,2.4 A3.3,3.3 0 1 1 2,2.4 Z" fill="#3bb7d9"/><rect x="-1.5" y="-1.3" width="3" height="2.4" rx="0.5" fill="#fff" opacity="0.92"/></g>
<g transform="translate(218.5 462)"><path d="M0,5 L-2,2.4 A3.3,3.3 0 1 1 2,2.4 Z" fill="#3bb7d9"/><rect x="-1.5" y="-1.3" width="3" height="2.4" rx="0.5" fill="#fff" opacity="0.92"/></g>
<g transform="translate(410 453)"><path d="M0,5 L-2,2.4 A3.3,3.3 0 1 1 2,2.4 Z" fill="#3bb7d9"/><rect x="-1.5" y="-1.3" width="3" height="2.4" rx="0.5" fill="#fff" opacity="0.92"/></g>
<g transform="translate(596 289)"><path d="M0,5 L-2,2.4 A3.3,3.3 0 1 1 2,2.4 Z" fill="#3bb7d9"/><rect x="-1.5" y="-1.3" width="3" height="2.4" rx="0.5" fill="#fff" opacity="0.92"/></g>
<g transform="translate(652.5 268)"><path d="M0,5 L-2,2.4 A3.3,3.3 0 1 1 2,2.4 Z" fill="#3bb7d9"/><rect x="-1.5" y="-1.3" width="3" height="2.4" rx="0.5" fill="#fff" opacity="0.92"/></g>
<g transform="translate(700 283.5)"><path d="M0,5 L-2,2.4 A3.3,3.3 0 1 1 2,2.4 Z" fill="#3bb7d9"/><rect x="-1.5" y="-1.3" width="3" height="2.4" rx="0.5" fill="#fff" opacity="0.92"/></g>
<g transform="translate(684 240.5)"><path d="M0,5 L-2,2.4 A3.3,3.3 0 1 1 2,2.4 Z" fill="#3bb7d9"/><rect x="-1.5" y="-1.3" width="3" height="2.4" rx="0.5" fill="#fff" opacity="0.92"/></g>
<g transform="translate(716.5 261.5)"><path d="M0,5 L-2,2.4 A3.3,3.3 0 1 1 2,2.4 Z" fill="#3bb7d9"/><rect x="-1.5" y="-1.3" width="3" height="2.4" rx="0.5" fill="#fff" opacity="0.92"/></g>
<g transform="translate(772.5 242)"><path d="M0,5 L-2,2.4 A3.3,3.3 0 1 1 2,2.4 Z" fill="#3bb7d9"/><rect x="-1.5" y="-1.3" width="3" height="2.4" rx="0.5" fill="#fff" opacity="0.92"/></g>
<g transform="translate(595.5 314)"><path d="M0,5 L-2,2.4 A3.3,3.3 0 1 1 2,2.4 Z" fill="#3bb7d9"/><rect x="-1.5" y="-1.3" width="3" height="2.4" rx="0.5" fill="#fff" opacity="0.92"/></g>
<g transform="translate(419 317)"><path d="M0,5 L-2,2.4 A3.3,3.3 0 1 1 2,2.4 Z" fill="#3bb7d9"/><rect x="-1.5" y="-1.3" width="3" height="2.4" rx="0.5" fill="#fff" opacity="0.92"/></g>
<g transform="translate(437.5 319)"><path d="M0,5 L-2,2.4 A3.3,3.3 0 1 1 2,2.4 Z" fill="#3bb7d9"/><rect x="-1.5" y="-1.3" width="3" height="2.4" rx="0.5" fill="#fff" opacity="0.92"/></g>
<g transform="translate(436 330.5)"><path d="M0,5 L-2,2.4 A3.3,3.3 0 1 1 2,2.4 Z" fill="#3bb7d9"/><rect x="-1.5" y="-1.3" width="3" height="2.4" rx="0.5" fill="#fff" opacity="0.92"/></g>
<g transform="translate(446.5 335)"><path d="M0,5 L-2,2.4 A3.3,3.3 0 1 1 2,2.4 Z" fill="#3bb7d9"/><rect x="-1.5" y="-1.3" width="3" height="2.4" rx="0.5" fill="#fff" opacity="0.92"/></g>
<g transform="translate(590.5 379.5)"><path d="M0,5 L-2,2.4 A3.3,3.3 0 1 1 2,2.4 Z" fill="#3bb7d9"/><rect x="-1.5" y="-1.3" width="3" height="2.4" rx="0.5" fill="#fff" opacity="0.92"/></g>
<g transform="translate(431 370.5)"><path d="M0,5 L-2,2.4 A3.3,3.3 0 1 1 2,2.4 Z" fill="#3bb7d9"/><rect x="-1.5" y="-1.3" width="3" height="2.4" rx="0.5" fill="#fff" opacity="0.92"/></g>
<g transform="translate(488.5 393)"><path d="M0,5 L-2,2.4 A3.3,3.3 0 1 1 2,2.4 Z" fill="#3bb7d9"/><rect x="-1.5" y="-1.3" width="3" height="2.4" rx="0.5" fill="#fff" opacity="0.92"/></g>
<g transform="translate(621.5 393)"><path d="M0,5 L-2,2.4 A3.3,3.3 0 1 1 2,2.4 Z" fill="#3bb7d9"/><rect x="-1.5" y="-1.3" width="3" height="2.4" rx="0.5" fill="#fff" opacity="0.92"/></g>
<g transform="translate(596.5 418.5)"><path d="M0,5 L-2,2.4 A3.3,3.3 0 1 1 2,2.4 Z" fill="#3bb7d9"/><rect x="-1.5" y="-1.3" width="3" height="2.4" rx="0.5" fill="#fff" opacity="0.92"/></g>
<g transform="translate(644 424)"><path d="M0,5 L-2,2.4 A3.3,3.3 0 1 1 2,2.4 Z" fill="#3bb7d9"/><rect x="-1.5" y="-1.3" width="3" height="2.4" rx="0.5" fill="#fff" opacity="0.92"/></g>
<g transform="translate(577.5 433)"><path d="M0,5 L-2,2.4 A3.3,3.3 0 1 1 2,2.4 Z" fill="#3bb7d9"/><rect x="-1.5" y="-1.3" width="3" height="2.4" rx="0.5" fill="#fff" opacity="0.92"/></g>
<g transform="translate(669.5 443)"><path d="M0,5 L-2,2.4 A3.3,3.3 0 1 1 2,2.4 Z" fill="#3bb7d9"/><rect x="-1.5" y="-1.3" width="3" height="2.4" rx="0.5" fill="#fff" opacity="0.92"/></g>
<g transform="translate(614 450.5)"><path d="M0,5 L-2,2.4 A3.3,3.3 0 1 1 2,2.4 Z" fill="#3bb7d9"/><rect x="-1.5" y="-1.3" width="3" height="2.4" rx="0.5" fill="#fff" opacity="0.92"/></g>
<g transform="translate(715 452)"><path d="M0,5 L-2,2.4 A3.3,3.3 0 1 1 2,2.4 Z" fill="#3bb7d9"/><rect x="-1.5" y="-1.3" width="3" height="2.4" rx="0.5" fill="#fff" opacity="0.92"/></g>
<g transform="translate(417.5 439)"><path d="M0,5 L-2,2.4 A3.3,3.3 0 1 1 2,2.4 Z" fill="#3bb7d9"/><rect x="-1.5" y="-1.3" width="3" height="2.4" rx="0.5" fill="#fff" opacity="0.92"/></g>
<g transform="translate(424 448)"><path d="M0,5 L-2,2.4 A3.3,3.3 0 1 1 2,2.4 Z" fill="#3bb7d9"/><rect x="-1.5" y="-1.3" width="3" height="2.4" rx="0.5" fill="#fff" opacity="0.92"/></g>
<g transform="translate(491 463.5)"><path d="M0,5 L-2,2.4 A3.3,3.3 0 1 1 2,2.4 Z" fill="#3bb7d9"/><rect x="-1.5" y="-1.3" width="3" height="2.4" rx="0.5" fill="#fff" opacity="0.92"/></g>
<g transform="translate(670 463)"><path d="M0,5 L-2,2.4 A3.3,3.3 0 1 1 2,2.4 Z" fill="#3bb7d9"/><rect x="-1.5" y="-1.3" width="3" height="2.4" rx="0.5" fill="#fff" opacity="0.92"/></g>
<g transform="translate(735 465)"><path d="M0,5 L-2,2.4 A3.3,3.3 0 1 1 2,2.4 Z" fill="#3bb7d9"/><rect x="-1.5" y="-1.3" width="3" height="2.4" rx="0.5" fill="#fff" opacity="0.92"/></g>
<g transform="translate(204 98)"><path d="M0,5 L-2,2.4 A3.3,3.3 0 1 1 2,2.4 Z" fill="#3bb7d9"/><rect x="-1.5" y="-1.3" width="3" height="2.4" rx="0.5" fill="#fff" opacity="0.92"/></g>
<g transform="translate(149 126)"><path d="M0,5 L-2,2.4 A3.3,3.3 0 1 1 2,2.4 Z" fill="#3bb7d9"/><rect x="-1.5" y="-1.3" width="3" height="2.4" rx="0.5" fill="#fff" opacity="0.92"/></g>
<g transform="translate(201 138)"><path d="M0,5 L-2,2.4 A3.3,3.3 0 1 1 2,2.4 Z" fill="#3bb7d9"/><rect x="-1.5" y="-1.3" width="3" height="2.4" rx="0.5" fill="#fff" opacity="0.92"/></g>
<g transform="translate(195.5 149)"><path d="M0,5 L-2,2.4 A3.3,3.3 0 1 1 2,2.4 Z" fill="#3bb7d9"/><rect x="-1.5" y="-1.3" width="3" height="2.4" rx="0.5" fill="#fff" opacity="0.92"/></g>
<g transform="translate(151 240)"><path d="M0,5 L-2,2.4 A3.3,3.3 0 1 1 2,2.4 Z" fill="#3bb7d9"/><rect x="-1.5" y="-1.3" width="3" height="2.4" rx="0.5" fill="#fff" opacity="0.92"/></g>
<g transform="translate(135.8 28.3)"><path d="M0,5 L-2,2.4 A3.3,3.3 0 1 1 2,2.4 Z" fill="#3bb7d9"/><rect x="-1.5" y="-1.3" width="3" height="2.4" rx="0.5" fill="#fff" opacity="0.92"/></g>
<g transform="translate(156 2.2)"><path d="M0,5 L-2,2.4 A3.3,3.3 0 1 1 2,2.4 Z" fill="#3bb7d9"/><rect x="-1.5" y="-1.3" width="3" height="2.4" rx="0.5" fill="#fff" opacity="0.92"/></g>
<g transform="translate(249 27.4)"><path d="M0,5 L-2,2.4 A3.3,3.3 0 1 1 2,2.4 Z" fill="#3bb7d9"/><rect x="-1.5" y="-1.3" width="3" height="2.4" rx="0.5" fill="#fff" opacity="0.92"/></g>
<g transform="translate(262 31)"><path d="M0,5 L-2,2.4 A3.3,3.3 0 1 1 2,2.4 Z" fill="#3bb7d9"/><rect x="-1.5" y="-1.3" width="3" height="2.4" rx="0.5" fill="#fff" opacity="0.92"/></g>
<g transform="translate(277.5 37)"><path d="M0,5 L-2,2.4 A3.3,3.3 0 1 1 2,2.4 Z" fill="#3bb7d9"/><rect x="-1.5" y="-1.3" width="3" height="2.4" rx="0.5" fill="#fff" opacity="0.92"/></g>
<g transform="translate(293 33.8)"><path d="M0,5 L-2,2.4 A3.3,3.3 0 1 1 2,2.4 Z" fill="#3bb7d9"/><rect x="-1.5" y="-1.3" width="3" height="2.4" rx="0.5" fill="#fff" opacity="0.92"/></g>
<g transform="translate(697.7 26.6)"><path d="M0,5 L-2,2.4 A3.3,3.3 0 1 1 2,2.4 Z" fill="#3bb7d9"/><rect x="-1.5" y="-1.3" width="3" height="2.4" rx="0.5" fill="#fff" opacity="0.92"/></g>
<g transform="translate(12.5 84)"><path d="M0,5 L-2,2.4 A3.3,3.3 0 1 1 2,2.4 Z" fill="#3bb7d9"/><rect x="-1.5" y="-1.3" width="3" height="2.4" rx="0.5" fill="#fff" opacity="0.92"/></g>
<g transform="translate(235 78)"><path d="M0,5 L-2,2.4 A3.3,3.3 0 1 1 2,2.4 Z" fill="#3bb7d9"/><rect x="-1.5" y="-1.3" width="3" height="2.4" rx="0.5" fill="#fff" opacity="0.92"/></g>
<g transform="translate(349 72)"><path d="M0,5 L-2,2.4 A3.3,3.3 0 1 1 2,2.4 Z" fill="#3bb7d9"/><rect x="-1.5" y="-1.3" width="3" height="2.4" rx="0.5" fill="#fff" opacity="0.92"/></g>
<g transform="translate(392 88)"><path d="M0,5 L-2,2.4 A3.3,3.3 0 1 1 2,2.4 Z" fill="#3bb7d9"/><rect x="-1.5" y="-1.3" width="3" height="2.4" rx="0.5" fill="#fff" opacity="0.92"/></g>
<g transform="translate(295 95)"><path d="M0,5 L-2,2.4 A3.3,3.3 0 1 1 2,2.4 Z" fill="#3bb7d9"/><rect x="-1.5" y="-1.3" width="3" height="2.4" rx="0.5" fill="#fff" opacity="0.92"/></g>
<g transform="translate(302 100)"><path d="M0,5 L-2,2.4 A3.3,3.3 0 1 1 2,2.4 Z" fill="#3bb7d9"/><rect x="-1.5" y="-1.3" width="3" height="2.4" rx="0.5" fill="#fff" opacity="0.92"/></g>
<g transform="translate(330 85)"><path d="M0,5 L-2,2.4 A3.3,3.3 0 1 1 2,2.4 Z" fill="#3bb7d9"/><rect x="-1.5" y="-1.3" width="3" height="2.4" rx="0.5" fill="#fff" opacity="0.92"/></g>
<g transform="translate(351 115)"><path d="M0,5 L-2,2.4 A3.3,3.3 0 1 1 2,2.4 Z" fill="#3bb7d9"/><rect x="-1.5" y="-1.3" width="3" height="2.4" rx="0.5" fill="#fff" opacity="0.92"/></g>
<g transform="translate(364 125)"><path d="M0,5 L-2,2.4 A3.3,3.3 0 1 1 2,2.4 Z" fill="#3bb7d9"/><rect x="-1.5" y="-1.3" width="3" height="2.4" rx="0.5" fill="#fff" opacity="0.92"/></g>
<g transform="translate(476 76)"><path d="M0,5 L-2,2.4 A3.3,3.3 0 1 1 2,2.4 Z" fill="#3bb7d9"/><rect x="-1.5" y="-1.3" width="3" height="2.4" rx="0.5" fill="#fff" opacity="0.92"/></g>
<g transform="translate(548 100)"><path d="M0,5 L-2,2.4 A3.3,3.3 0 1 1 2,2.4 Z" fill="#3bb7d9"/><rect x="-1.5" y="-1.3" width="3" height="2.4" rx="0.5" fill="#fff" opacity="0.92"/></g>
<g transform="translate(365 118)"><path d="M0,5 L-2,2.4 A3.3,3.3 0 1 1 2,2.4 Z" fill="#3bb7d9"/><rect x="-1.5" y="-1.3" width="3" height="2.4" rx="0.5" fill="#fff" opacity="0.92"/></g>
<g transform="translate(240 122)"><path d="M0,5 L-2,2.4 A3.3,3.3 0 1 1 2,2.4 Z" fill="#3bb7d9"/><rect x="-1.5" y="-1.3" width="3" height="2.4" rx="0.5" fill="#fff" opacity="0.92"/></g>
<g transform="translate(258 148)"><path d="M0,5 L-2,2.4 A3.3,3.3 0 1 1 2,2.4 Z" fill="#3bb7d9"/><rect x="-1.5" y="-1.3" width="3" height="2.4" rx="0.5" fill="#fff" opacity="0.92"/></g>
<g transform="translate(301 250)"><path d="M0,5 L-2,2.4 A3.3,3.3 0 1 1 2,2.4 Z" fill="#3bb7d9"/><rect x="-1.5" y="-1.3" width="3" height="2.4" rx="0.5" fill="#fff" opacity="0.92"/></g>
<g transform="translate(266 258)"><path d="M0,5 L-2,2.4 A3.3,3.3 0 1 1 2,2.4 Z" fill="#3bb7d9"/><rect x="-1.5" y="-1.3" width="3" height="2.4" rx="0.5" fill="#fff" opacity="0.92"/></g>
<g transform="translate(300 262)"><path d="M0,5 L-2,2.4 A3.3,3.3 0 1 1 2,2.4 Z" fill="#3bb7d9"/><rect x="-1.5" y="-1.3" width="3" height="2.4" rx="0.5" fill="#fff" opacity="0.92"/></g>
<g transform="translate(376 260)"><path d="M0,5 L-2,2.4 A3.3,3.3 0 1 1 2,2.4 Z" fill="#3bb7d9"/><rect x="-1.5" y="-1.3" width="3" height="2.4" rx="0.5" fill="#fff" opacity="0.92"/></g>
<g transform="translate(553 227)"><path d="M0,5 L-2,2.4 A3.3,3.3 0 1 1 2,2.4 Z" fill="#3bb7d9"/><rect x="-1.5" y="-1.3" width="3" height="2.4" rx="0.5" fill="#fff" opacity="0.92"/></g>
<g transform="translate(474 268)"><path d="M0,5 L-2,2.4 A3.3,3.3 0 1 1 2,2.4 Z" fill="#3bb7d9"/><rect x="-1.5" y="-1.3" width="3" height="2.4" rx="0.5" fill="#fff" opacity="0.92"/></g>
<g transform="translate(368 218)"><path d="M0,5 L-2,2.4 A3.3,3.3 0 1 1 2,2.4 Z" fill="#3bb7d9"/><rect x="-1.5" y="-1.3" width="3" height="2.4" rx="0.5" fill="#fff" opacity="0.92"/></g>
<g transform="translate(588 272)"><path d="M0,5 L-2,2.4 A3.3,3.3 0 1 1 2,2.4 Z" fill="#3bb7d9"/><rect x="-1.5" y="-1.3" width="3" height="2.4" rx="0.5" fill="#fff" opacity="0.92"/></g>
<g transform="translate(734 88)"><path d="M0,5 L-2,2.4 A3.3,3.3 0 1 1 2,2.4 Z" fill="#3bb7d9"/><rect x="-1.5" y="-1.3" width="3" height="2.4" rx="0.5" fill="#fff" opacity="0.92"/></g>
<g transform="translate(725 176)"><path d="M0,5 L-2,2.4 A3.3,3.3 0 1 1 2,2.4 Z" fill="#3bb7d9"/><rect x="-1.5" y="-1.3" width="3" height="2.4" rx="0.5" fill="#fff" opacity="0.92"/></g>
<g transform="translate(743 202)"><path d="M0,5 L-2,2.4 A3.3,3.3 0 1 1 2,2.4 Z" fill="#3bb7d9"/><rect x="-1.5" y="-1.3" width="3" height="2.4" rx="0.5" fill="#fff" opacity="0.92"/></g>
<g transform="translate(697 215)"><path d="M0,5 L-2,2.4 A3.3,3.3 0 1 1 2,2.4 Z" fill="#3bb7d9"/><rect x="-1.5" y="-1.3" width="3" height="2.4" rx="0.5" fill="#fff" opacity="0.92"/></g>
<g transform="translate(806 186)"><path d="M0,5 L-2,2.4 A3.3,3.3 0 1 1 2,2.4 Z" fill="#3bb7d9"/><rect x="-1.5" y="-1.3" width="3" height="2.4" rx="0.5" fill="#fff" opacity="0.92"/></g>
<g transform="translate(812 200)"><path d="M0,5 L-2,2.4 A3.3,3.3 0 1 1 2,2.4 Z" fill="#3bb7d9"/><rect x="-1.5" y="-1.3" width="3" height="2.4" rx="0.5" fill="#fff" opacity="0.92"/></g>
<g transform="translate(760 222)"><path d="M0,5 L-2,2.4 A3.3,3.3 0 1 1 2,2.4 Z" fill="#3bb7d9"/><rect x="-1.5" y="-1.3" width="3" height="2.4" rx="0.5" fill="#fff" opacity="0.92"/></g>
<g transform="translate(728 234)"><path d="M0,5 L-2,2.4 A3.3,3.3 0 1 1 2,2.4 Z" fill="#3bb7d9"/><rect x="-1.5" y="-1.3" width="3" height="2.4" rx="0.5" fill="#fff" opacity="0.92"/></g>
<g transform="translate(45 56)"><path d="M0,5 L-2,2.4 A3.3,3.3 0 1 1 2,2.4 Z" fill="#3bb7d9"/><rect x="-1.5" y="-1.3" width="3" height="2.4" rx="0.5" fill="#fff" opacity="0.92"/></g>
<g transform="translate(100 170)"><path d="M0,5 L-2,2.4 A3.3,3.3 0 1 1 2,2.4 Z" fill="#3bb7d9"/><rect x="-1.5" y="-1.3" width="3" height="2.4" rx="0.5" fill="#fff" opacity="0.92"/></g>
<g transform="translate(100 272)"><path d="M0,5 L-2,2.4 A3.3,3.3 0 1 1 2,2.4 Z" fill="#3bb7d9"/><rect x="-1.5" y="-1.3" width="3" height="2.4" rx="0.5" fill="#fff" opacity="0.92"/></g>
<g transform="translate(128 250)"><path d="M0,5 L-2,2.4 A3.3,3.3 0 1 1 2,2.4 Z" fill="#3bb7d9"/><rect x="-1.5" y="-1.3" width="3" height="2.4" rx="0.5" fill="#fff" opacity="0.92"/></g>
<g transform="translate(60 185)"><path d="M0,5 L-2,2.4 A3.3,3.3 0 1 1 2,2.4 Z" fill="#3bb7d9"/><rect x="-1.5" y="-1.3" width="3" height="2.4" rx="0.5" fill="#fff" opacity="0.92"/></g>
<g transform="translate(78 162)"><path d="M0,5 L-2,2.4 A3.3,3.3 0 1 1 2,2.4 Z" fill="#3bb7d9"/><rect x="-1.5" y="-1.3" width="3" height="2.4" rx="0.5" fill="#fff" opacity="0.92"/></g>
<g transform="translate(199.5 271.5)"><path d="M0,5 L-2,2.4 A3.3,3.3 0 1 1 2,2.4 Z" fill="#a067e6"/><rect x="-1.5" y="-1.3" width="3" height="2.4" rx="0.5" fill="#fff" opacity="0.92"/></g>
<g transform="translate(299 372)"><path d="M0,5 L-2,2.4 A3.3,3.3 0 1 1 2,2.4 Z" fill="#a067e6"/><rect x="-1.5" y="-1.3" width="3" height="2.4" rx="0.5" fill="#fff" opacity="0.92"/></g>
<g transform="translate(404 368)"><path d="M0,5 L-2,2.4 A3.3,3.3 0 1 1 2,2.4 Z" fill="#a067e6"/><rect x="-1.5" y="-1.3" width="3" height="2.4" rx="0.5" fill="#fff" opacity="0.92"/></g>
<g transform="translate(395 393)"><path d="M0,5 L-2,2.4 A3.3,3.3 0 1 1 2,2.4 Z" fill="#a067e6"/><rect x="-1.5" y="-1.3" width="3" height="2.4" rx="0.5" fill="#fff" opacity="0.92"/></g>
<g transform="translate(392.5 409)"><path d="M0,5 L-2,2.4 A3.3,3.3 0 1 1 2,2.4 Z" fill="#a067e6"/><rect x="-1.5" y="-1.3" width="3" height="2.4" rx="0.5" fill="#fff" opacity="0.92"/></g>
<g transform="translate(291.5 419)"><path d="M0,5 L-2,2.4 A3.3,3.3 0 1 1 2,2.4 Z" fill="#a067e6"/><rect x="-1.5" y="-1.3" width="3" height="2.4" rx="0.5" fill="#fff" opacity="0.92"/></g>
<g transform="translate(473.5 286.5)"><path d="M0,5 L-2,2.4 A3.3,3.3 0 1 1 2,2.4 Z" fill="#a067e6"/><rect x="-1.5" y="-1.3" width="3" height="2.4" rx="0.5" fill="#fff" opacity="0.92"/></g>
<g transform="translate(716.5 296.5)"><path d="M0,5 L-2,2.4 A3.3,3.3 0 1 1 2,2.4 Z" fill="#a067e6"/><rect x="-1.5" y="-1.3" width="3" height="2.4" rx="0.5" fill="#fff" opacity="0.92"/></g>
<g transform="translate(799.5 279)"><path d="M0,5 L-2,2.4 A3.3,3.3 0 1 1 2,2.4 Z" fill="#a067e6"/><rect x="-1.5" y="-1.3" width="3" height="2.4" rx="0.5" fill="#fff" opacity="0.92"/></g>
<g transform="translate(760 313)"><path d="M0,5 L-2,2.4 A3.3,3.3 0 1 1 2,2.4 Z" fill="#a067e6"/><rect x="-1.5" y="-1.3" width="3" height="2.4" rx="0.5" fill="#fff" opacity="0.92"/></g>
<g transform="translate(713.5 345.5)"><path d="M0,5 L-2,2.4 A3.3,3.3 0 1 1 2,2.4 Z" fill="#a067e6"/><rect x="-1.5" y="-1.3" width="3" height="2.4" rx="0.5" fill="#fff" opacity="0.92"/></g>
<g transform="translate(603.5 352)"><path d="M0,5 L-2,2.4 A3.3,3.3 0 1 1 2,2.4 Z" fill="#a067e6"/><rect x="-1.5" y="-1.3" width="3" height="2.4" rx="0.5" fill="#fff" opacity="0.92"/></g>
<g transform="translate(653 32)"><path d="M0,5 L-2,2.4 A3.3,3.3 0 1 1 2,2.4 Z" fill="#a067e6"/><rect x="-1.5" y="-1.3" width="3" height="2.4" rx="0.5" fill="#fff" opacity="0.92"/></g>
<g transform="translate(46.7 42.5)"><path d="M0,5 L-2,2.4 A3.3,3.3 0 1 1 2,2.4 Z" fill="#a067e6"/><rect x="-1.5" y="-1.3" width="3" height="2.4" rx="0.5" fill="#fff" opacity="0.92"/></g>
<g transform="translate(563.4 30)"><path d="M0,5 L-2,2.4 A3.3,3.3 0 1 1 2,2.4 Z" fill="#a067e6"/><rect x="-1.5" y="-1.3" width="3" height="2.4" rx="0.5" fill="#fff" opacity="0.92"/></g>
<g transform="translate(823.5 33)"><path d="M0,5 L-2,2.4 A3.3,3.3 0 1 1 2,2.4 Z" fill="#a067e6"/><rect x="-1.5" y="-1.3" width="3" height="2.4" rx="0.5" fill="#fff" opacity="0.92"/></g>
<g transform="translate(2.5 129)"><path d="M0,5 L-2,2.4 A3.3,3.3 0 1 1 2,2.4 Z" fill="#a067e6"/><rect x="-1.5" y="-1.3" width="3" height="2.4" rx="0.5" fill="#fff" opacity="0.92"/></g>
<g transform="translate(470 55)"><path d="M0,5 L-2,2.4 A3.3,3.3 0 1 1 2,2.4 Z" fill="#a067e6"/><rect x="-1.5" y="-1.3" width="3" height="2.4" rx="0.5" fill="#fff" opacity="0.92"/></g>
<g transform="translate(740 232)"><path d="M0,5 L-2,2.4 A3.3,3.3 0 1 1 2,2.4 Z" fill="#a067e6"/><rect x="-1.5" y="-1.3" width="3" height="2.4" rx="0.5" fill="#fff" opacity="0.92"/></g>
<g transform="translate(756 195)"><path d="M0,5 L-2,2.4 A3.3,3.3 0 1 1 2,2.4 Z" fill="#a067e6"/><rect x="-1.5" y="-1.3" width="3" height="2.4" rx="0.5" fill="#fff" opacity="0.92"/></g>
<g transform="translate(32 110)"><path d="M0,5 L-2,2.4 A3.3,3.3 0 1 1 2,2.4 Z" fill="#a067e6"/><rect x="-1.5" y="-1.3" width="3" height="2.4" rx="0.5" fill="#fff" opacity="0.92"/></g>
<g transform="translate(68 238)"><path d="M0,5 L-2,2.4 A3.3,3.3 0 1 1 2,2.4 Z" fill="#a067e6"/><rect x="-1.5" y="-1.3" width="3" height="2.4" rx="0.5" fill="#fff" opacity="0.92"/></g>
<g transform="translate(100 160)"><path d="M0,5 L-2,2.4 A3.3,3.3 0 1 1 2,2.4 Z" fill="#a067e6"/><rect x="-1.5" y="-1.3" width="3" height="2.4" rx="0.5" fill="#fff" opacity="0.92"/></g>
<g transform="translate(211 373)"><path d="M0,5 L-2,2.4 A3.3,3.3 0 1 1 2,2.4 Z" fill="#f47b3e"/><rect x="-1.5" y="-1.3" width="3" height="2.4" rx="0.5" fill="#fff" opacity="0.92"/></g>
<g transform="translate(437.5 293)"><path d="M0,5 L-2,2.4 A3.3,3.3 0 1 1 2,2.4 Z" fill="#f47b3e"/><rect x="-1.5" y="-1.3" width="3" height="2.4" rx="0.5" fill="#fff" opacity="0.92"/></g>
<g transform="translate(664 248)"><path d="M0,5 L-2,2.4 A3.3,3.3 0 1 1 2,2.4 Z" fill="#f47b3e"/><rect x="-1.5" y="-1.3" width="3" height="2.4" rx="0.5" fill="#fff" opacity="0.92"/></g>
<g transform="translate(798.5 264)"><path d="M0,5 L-2,2.4 A3.3,3.3 0 1 1 2,2.4 Z" fill="#f47b3e"/><rect x="-1.5" y="-1.3" width="3" height="2.4" rx="0.5" fill="#fff" opacity="0.92"/></g>
<g transform="translate(790 305.5)"><path d="M0,5 L-2,2.4 A3.3,3.3 0 1 1 2,2.4 Z" fill="#f47b3e"/><rect x="-1.5" y="-1.3" width="3" height="2.4" rx="0.5" fill="#fff" opacity="0.92"/></g>
<g transform="translate(563.5 363)"><path d="M0,5 L-2,2.4 A3.3,3.3 0 1 1 2,2.4 Z" fill="#f47b3e"/><rect x="-1.5" y="-1.3" width="3" height="2.4" rx="0.5" fill="#fff" opacity="0.92"/></g>
<g transform="translate(650.5 439.5)"><path d="M0,5 L-2,2.4 A3.3,3.3 0 1 1 2,2.4 Z" fill="#f47b3e"/><rect x="-1.5" y="-1.3" width="3" height="2.4" rx="0.5" fill="#fff" opacity="0.92"/></g>
<g transform="translate(827 389.5)"><path d="M0,5 L-2,2.4 A3.3,3.3 0 1 1 2,2.4 Z" fill="#f47b3e"/><rect x="-1.5" y="-1.3" width="3" height="2.4" rx="0.5" fill="#fff" opacity="0.92"/></g>
<g transform="translate(615 307.6)"><path d="M0,5 L-2,2.4 A3.3,3.3 0 1 1 2,2.4 Z" fill="#f47b3e"/><rect x="-1.5" y="-1.3" width="3" height="2.4" rx="0.5" fill="#fff" opacity="0.92"/></g>
<g transform="translate(600 45.2)"><path d="M0,5 L-2,2.4 A3.3,3.3 0 1 1 2,2.4 Z" fill="#f47b3e"/><rect x="-1.5" y="-1.3" width="3" height="2.4" rx="0.5" fill="#fff" opacity="0.92"/></g>
<g transform="translate(16.6 51)"><path d="M0,5 L-2,2.4 A3.3,3.3 0 1 1 2,2.4 Z" fill="#f47b3e"/><rect x="-1.5" y="-1.3" width="3" height="2.4" rx="0.5" fill="#fff" opacity="0.92"/></g>
<g transform="translate(5 152.5)"><path d="M0,5 L-2,2.4 A3.3,3.3 0 1 1 2,2.4 Z" fill="#f47b3e"/><rect x="-1.5" y="-1.3" width="3" height="2.4" rx="0.5" fill="#fff" opacity="0.92"/></g>
<g transform="translate(116 369)"><path d="M0,5 L-2,2.4 A3.3,3.3 0 1 1 2,2.4 Z" fill="#e9525c"/><rect x="-1.5" y="-1.3" width="3" height="2.4" rx="0.5" fill="#fff" opacity="0.92"/></g>
<g transform="translate(338 336.5)"><path d="M0,5 L-2,2.4 A3.3,3.3 0 1 1 2,2.4 Z" fill="#e9525c"/><rect x="-1.5" y="-1.3" width="3" height="2.4" rx="0.5" fill="#fff" opacity="0.92"/></g>
<g transform="translate(471 320)"><path d="M0,5 L-2,2.4 A3.3,3.3 0 1 1 2,2.4 Z" fill="#e9525c"/><rect x="-1.5" y="-1.3" width="3" height="2.4" rx="0.5" fill="#fff" opacity="0.92"/></g>
<g transform="translate(9 67.5)"><path d="M0,5 L-2,2.4 A3.3,3.3 0 1 1 2,2.4 Z" fill="#e9525c"/><rect x="-1.5" y="-1.3" width="3" height="2.4" rx="0.5" fill="#fff" opacity="0.92"/></g>
<g transform="translate(348 244)"><path d="M0,5 L-2,2.4 A3.3,3.3 0 1 1 2,2.4 Z" fill="#e9525c"/><rect x="-1.5" y="-1.3" width="3" height="2.4" rx="0.5" fill="#fff" opacity="0.92"/></g>
<g transform="translate(306 251)"><path d="M0,5 L-2,2.4 A3.3,3.3 0 1 1 2,2.4 Z" fill="#e9525c"/><rect x="-1.5" y="-1.3" width="3" height="2.4" rx="0.5" fill="#fff" opacity="0.92"/></g>
<g transform="translate(466 270)"><path d="M0,5 L-2,2.4 A3.3,3.3 0 1 1 2,2.4 Z" fill="#e9525c"/><rect x="-1.5" y="-1.3" width="3" height="2.4" rx="0.5" fill="#fff" opacity="0.92"/></g>
<g transform="translate(96 250)"><path d="M0,5 L-2,2.4 A3.3,3.3 0 1 1 2,2.4 Z" fill="#e9525c"/><rect x="-1.5" y="-1.3" width="3" height="2.4" rx="0.5" fill="#fff" opacity="0.92"/></g>
<g transform="translate(742 232)"><path d="M0,5 L-2,2.4 A3.3,3.3 0 1 1 2,2.4 Z" fill="#e9525c"/><rect x="-1.5" y="-1.3" width="3" height="2.4" rx="0.5" fill="#fff" opacity="0.92"/></g>
<circle cx="107" cy="320.5" r="3.2" fill="#f2a93b"/><circle cx="107" cy="320.5" r="1.6" fill="#e4483b"/>
<rect x="459" y="359.5" width="10" height="4.5" rx="1.2" fill="#fff" stroke="#999" stroke-width="0.5"/><circle cx="461.5" cy="361.7" r="1" fill="#e33"/><circle cx="464" cy="361.7" r="1" fill="#f2b400"/><circle cx="466.5" cy="361.7" r="1" fill="#2a2"/><rect x="463.6" y="364" width="0.8" height="3" fill="#888"/>
<text x="52" y="45" font-size="4.6" fill="#66676a" text-anchor="start" font-weight="normal">打浦逻东店</text>
<text x="116" y="377" font-size="4.6" fill="#66676a" text-anchor="middle" font-weight="normal">上海西部物业</text>
<text x="116" y="383" font-size="4.6" fill="#66676a" text-anchor="middle" font-weight="normal">有限公司管理处</text>
<text x="107" y="329.5" font-size="4.6" fill="#66676a" text-anchor="middle" font-weight="normal">曹安沥泉排亭</text>
<text x="123" y="290.5" font-size="4.6" fill="#66676a" text-anchor="middle" font-weight="normal">华丰商苑</text>
<text x="153" y="311" font-size="5.6" fill="#a9aaac" text-anchor="middle" font-weight="normal">上海英兰汽车销售</text>
<text x="153" y="318" font-size="5.6" fill="#a9aaac" text-anchor="middle" font-weight="normal">服务有限公司</text>
<text x="172" y="270" font-size="4.6" fill="#66676a" text-anchor="middle" font-weight="normal">车盛隆上海律民车</text>
<text x="176" y="276" font-size="4.6" fill="#66676a" text-anchor="middle" font-weight="normal">港服有限公司</text>
<text x="183" y="347.5" font-size="4.6" fill="#66676a" text-anchor="middle" font-weight="normal">上海永达通顺汽车</text>
<text x="183" y="353.5" font-size="4.6" fill="#66676a" text-anchor="middle" font-weight="normal">销售服务有限公司</text>
<text x="180" y="433.5" font-size="4.6" fill="#66676a" text-anchor="middle" font-weight="normal">KTV量贩</text>
<text x="197" y="449" font-size="4.6" fill="#66676a" text-anchor="middle" font-weight="normal">KTV宝贝量子</text>
<text x="197" y="455" font-size="4.6" fill="#66676a" text-anchor="middle" font-weight="normal">消防中心</text>
<text x="160" y="460" font-size="5.6" fill="#a9aaac" text-anchor="middle" font-weight="normal">馨越公寓</text>
<text x="219" y="312.5" font-size="4.6" fill="#66676a" text-anchor="middle" font-weight="normal">米欧分集团</text>
<text x="219" y="318.5" font-size="4.6" fill="#66676a" text-anchor="middle" font-weight="normal">农贸配送中心</text>
<text x="228" y="337" font-size="4.6" fill="#66676a" text-anchor="middle" font-weight="normal">金沙商务花园</text>
<text x="228" y="343" font-size="4.6" fill="#66676a" text-anchor="middle" font-weight="normal">永园小号楼</text>
<text x="221" y="350.5" font-size="5.8" fill="#a9aaac" text-anchor="middle" font-weight="normal">云升商务</text>
<text x="221" y="357.5" font-size="5.8" fill="#a9aaac" text-anchor="middle" font-weight="normal">花园(南园)</text>
<text x="211" y="382" font-size="4.6" fill="#66676a" text-anchor="middle" font-weight="normal">博苑食堂</text>
<text x="246" y="394" font-size="5.8" fill="#a9aaac" text-anchor="middle" font-weight="normal">启源针织(上海)</text>
<text x="246" y="401" font-size="5.8" fill="#a9aaac" text-anchor="middle" font-weight="normal">有限公司</text>
<text x="270" y="381" font-size="4.6" fill="#66676a" text-anchor="middle" font-weight="normal">上海瑞麟博展公子</text>
<text x="268" y="387" font-size="4.6" fill="#66676a" text-anchor="middle" font-weight="normal">科技有限公司</text>
<text x="298" y="326" font-size="4.6" fill="#66676a" text-anchor="middle" font-weight="normal">上海庆旺展览</text>
<text x="298" y="332" font-size="4.6" fill="#66676a" text-anchor="middle" font-weight="normal">生产有限公司</text>
<text x="258" y="289" font-size="5.8" fill="#a9aaac" text-anchor="middle" font-weight="normal">长征金沙江</text>
<text x="258" y="296.5" font-size="5.8" fill="#a9aaac" text-anchor="middle" font-weight="normal">工业园</text>
<text x="310" y="284" font-size="4.6" fill="#66676a" text-anchor="middle" font-weight="normal">同普路1273弄</text>
<text x="310" y="290" font-size="4.6" fill="#66676a" text-anchor="middle" font-weight="normal">1幢1号</text>
<text x="350" y="298.5" font-size="4.6" fill="#66676a" text-anchor="middle" font-weight="normal">上海安瀛通信</text>
<text x="350" y="304.5" font-size="4.6" fill="#66676a" text-anchor="middle" font-weight="normal">制品公司</text>
<text x="386" y="304.5" font-size="4.6" fill="#66676a" text-anchor="middle" font-weight="normal">雪博洗衣店</text>
<text x="386" y="310.5" font-size="4.6" fill="#66676a" text-anchor="middle" font-weight="normal">服务大厅</text>
<text x="383" y="318.5" font-size="4.6" fill="#66676a" text-anchor="middle" font-weight="normal">国申能源工坊</text>
<text x="346" y="324.5" font-size="4.6" fill="#66676a" text-anchor="middle" font-weight="normal">同普路1225弄1号</text>
<text x="360" y="337.5" font-size="4.6" fill="#66676a" text-anchor="middle" font-weight="normal">长征镇育北</text>
<text x="360" y="343.5" font-size="4.6" fill="#66676a" text-anchor="middle" font-weight="normal">经济合作社</text>
<text x="352" y="354" font-size="4.6" fill="#66676a" text-anchor="middle" font-weight="normal">同普路真北坊</text>
<text x="352" y="360" font-size="4.6" fill="#66676a" text-anchor="middle" font-weight="normal">1245弄9号</text>
<text x="310" y="366" font-size="5.6" fill="#a9aaac" text-anchor="middle" font-weight="normal">真北坊</text>
<text x="302" y="359" font-size="4.4" fill="#a9aaac" text-anchor="middle" font-weight="normal">七二幢</text>
<text x="349" y="377.5" font-size="4.6" fill="#66676a" text-anchor="middle" font-weight="normal">同普路1175弄6号</text>
<text x="312" y="382.5" font-size="4.6" fill="#66676a" text-anchor="middle" font-weight="normal">品儒智信折扣店</text>
<text x="322" y="389.5" font-size="4.6" fill="#66676a" text-anchor="start" font-weight="normal">上海大陀岭软山</text>
<text x="322" y="395.5" font-size="4.6" fill="#66676a" text-anchor="start" font-weight="normal">服饰有限公司</text>
<text x="288" y="409.5" font-size="4.6" fill="#66676a" text-anchor="middle" font-weight="normal">常州奶站</text>
<text x="292" y="429.5" font-size="4.6" fill="#66676a" text-anchor="middle" font-weight="normal">上海雪慧</text>
<text x="292" y="435.5" font-size="4.6" fill="#66676a" text-anchor="middle" font-weight="normal">连锁集团</text>
<text x="369" y="389.5" font-size="5.6" fill="#a9aaac" text-anchor="middle" font-weight="normal">同普坊</text>
<text x="369" y="396.5" font-size="5.6" fill="#a9aaac" text-anchor="middle" font-weight="normal">(同普超市)</text>
<text x="395" y="402.5" font-size="4.6" fill="#66676a" text-anchor="middle" font-weight="normal">87儿童园</text>
<text x="393" y="418.5" font-size="4.6" fill="#66676a" text-anchor="middle" font-weight="normal">上海健腾医疗</text>
<text x="393" y="424.5" font-size="4.6" fill="#66676a" text-anchor="middle" font-weight="normal">器械有限公司</text>
<text x="384" y="436.5" font-size="4.6" fill="#66676a" text-anchor="start" font-weight="normal">同康路1175弄9号</text>
<text x="332" y="428.5" font-size="4.6" fill="#66676a" text-anchor="middle" font-weight="normal">相思本草化妆品</text>
<text x="332" y="434.5" font-size="4.6" fill="#66676a" text-anchor="middle" font-weight="normal">有限公司贵港园</text>
<text x="366" y="445.5" font-size="4.6" fill="#66676a" text-anchor="middle" font-weight="normal">云岭西路</text>
<text x="366" y="451.5" font-size="4.6" fill="#66676a" text-anchor="middle" font-weight="normal">156弄3号</text>
<text x="473" y="295.5" font-size="4.6" fill="#66676a" text-anchor="middle" font-weight="normal">HENGTONG</text>
<text x="437" y="302" font-size="4.6" fill="#66676a" text-anchor="middle" font-weight="normal">M Cake</text>
<text x="447" y="311.5" font-size="5.6" fill="#a9aaac" text-anchor="middle" font-weight="normal">同普路·长征坊</text>
<text x="457" y="319.5" font-size="4.6" fill="#66676a" text-anchor="middle" font-weight="normal">富阳总部</text>
<text x="457" y="325.5" font-size="4.6" fill="#66676a" text-anchor="middle" font-weight="normal">消防支队</text>
<text x="426" y="332.5" font-size="4.6" fill="#66676a" text-anchor="middle" font-weight="normal">长征镇银行区</text>
<text x="472" y="334.5" font-size="4.6" fill="#66676a" text-anchor="middle" font-weight="normal">湛万食品工业(南山)</text>
<text x="472" y="340.5" font-size="4.6" fill="#66676a" text-anchor="middle" font-weight="normal">有限公司上海分公司</text>
<text x="418" y="358.5" font-size="4.6" fill="#66676a" text-anchor="middle" font-weight="normal">长征工业区</text>
<text x="409" y="370.5" font-size="4.6" fill="#66676a" text-anchor="start" font-weight="normal">TG PRODUCTION</text>
<text x="517" y="334.5" font-size="5.8" fill="#a9aaac" text-anchor="middle" font-weight="normal">长征工业区</text>
<text x="517" y="342" font-size="5.8" fill="#a9aaac" text-anchor="middle" font-weight="normal">西站工业坊</text>
<text x="525" y="318" font-size="4.4" fill="#a9aaac" text-anchor="middle" font-weight="normal">4号楼</text>
<text x="512" y="349.5" font-size="4.4" fill="#a9aaac" text-anchor="middle" font-weight="normal">3号楼</text>
<text x="508" y="363.5" font-size="4.4" fill="#a9aaac" text-anchor="middle" font-weight="normal">1号楼</text>
<text x="596" y="298" font-size="4.6" fill="#66676a" text-anchor="middle" font-weight="normal">基圣大厦</text>
<text x="574" y="316" font-size="4.6" fill="#66676a" text-anchor="middle" font-weight="normal">基圣大厦A座</text>
<text x="547" y="365.5" font-size="4.6" fill="#66676a" text-anchor="middle" font-weight="normal">亚祖麻辣捞</text>
<text x="615" y="316.5" font-size="4.6" fill="#66676a" text-anchor="middle" font-weight="normal">润七汉堡</text>
<text x="603" y="361" font-size="4.6" fill="#9b59d0" text-anchor="middle" font-weight="normal">香光街城</text>
<text x="660" y="250.5" font-size="4.6" fill="#66676a" text-anchor="end" font-weight="normal">张千岁</text>
<text x="676" y="250.5" font-size="4.6" fill="#66676a" text-anchor="start" font-weight="normal">绿洲中环</text>
<text x="676" y="256.5" font-size="4.6" fill="#66676a" text-anchor="start" font-weight="normal">中心D栋楼</text>
<text x="770" y="251.5" font-size="4.6" fill="#66676a" text-anchor="middle" font-weight="normal">湘附证券</text>
<text x="740" y="268" font-size="4.8" fill="#777" text-anchor="middle" font-weight="normal" transform="rotate(14 740 268)">金沙江路</text>
<text x="705" y="285.5" font-size="4.6" fill="#66676a" text-anchor="start" font-weight="normal">118广场商务中心</text>
<text x="712" y="298" font-size="4.6" fill="#66676a" text-anchor="end" font-weight="normal">玲珑美茶馆</text>
<text x="718" y="347.5" font-size="4.6" fill="#9b59d0" text-anchor="start" font-weight="normal">臻悟思城</text>
<text x="803" y="263.5" font-size="4.6" fill="#66676a" text-anchor="start" font-weight="normal">珠育日式肥牛</text>
<text x="803" y="269.5" font-size="4.6" fill="#66676a" text-anchor="start" font-weight="normal">涮馆漕溪店</text>
<text x="800" y="288.5" font-size="4.6" fill="#66676a" text-anchor="middle" font-weight="normal">爱屋居家居</text>
<text x="792" y="314.5" font-size="4.6" fill="#66676a" text-anchor="middle" font-weight="normal">词剧生煎</text>
<text x="760" y="319" font-size="3.8" fill="#66676a" text-anchor="middle" font-weight="normal">臻事</text>
<text x="508" y="392.5" font-size="4.6" fill="#66676a" text-anchor="start" font-weight="normal">上海清晨合储有限</text>
<text x="508" y="398.5" font-size="4.6" fill="#66676a" text-anchor="start" font-weight="normal">责任公司张黎楼</text>
<text x="554" y="428.5" font-size="5.8" fill="#a9aaac" text-anchor="middle" font-weight="normal">上海华明电力设备</text>
<text x="554" y="436.5" font-size="5.8" fill="#a9aaac" text-anchor="middle" font-weight="normal">制造有限公司</text>
<text x="600" y="434.5" font-size="4.6" fill="#66676a" text-anchor="start" font-weight="normal">华明苑</text>
<text x="601" y="407.5" font-size="4.6" fill="#66676a" text-anchor="start" font-weight="normal">上海典雅汽车</text>
<text x="601" y="413.5" font-size="4.6" fill="#66676a" text-anchor="start" font-weight="normal">设备有限公司</text>
<text x="644" y="432.5" font-size="4.6" fill="#66676a" text-anchor="middle" font-weight="normal">汇茂商务大厦</text>
<text x="632" y="441" font-size="4.6" fill="#66676a" text-anchor="end" font-weight="normal">国仔糕点</text>
<text x="661" y="452" font-size="4.6" fill="#66676a" text-anchor="middle" font-weight="normal">公寓浴池</text>
<text x="616" y="445.5" font-size="4.6" fill="#66676a" text-anchor="start" font-weight="normal">上海鸿腾</text>
<text x="616" y="452" font-size="4.6" fill="#66676a" text-anchor="start" font-weight="normal">广有限公司</text>
<text x="436" y="448.5" font-size="4.6" fill="#66676a" text-anchor="middle" font-weight="normal">徐家宅6号</text>
<text x="437" y="459.5" font-size="4.6" fill="#66676a" text-anchor="start" font-weight="normal">海关下</text>
<text x="406" y="402" font-size="4.6" fill="#66676a" text-anchor="end" font-weight="normal">同园</text>
<text x="408" y="416" font-size="4.6" fill="#66676a" text-anchor="end" font-weight="normal">医疗</text>
<text x="408" y="422" font-size="4.6" fill="#66676a" text-anchor="end" font-weight="normal">公司</text>
<text x="178" y="136.5" font-size="4.6" fill="#66676a" text-anchor="middle" font-weight="normal">上海贵和金沙汽车</text>
<text x="178" y="142.5" font-size="4.6" fill="#66676a" text-anchor="middle" font-weight="normal">销售有限公司</text>
<text x="196" y="157.5" font-size="4.6" fill="#66676a" text-anchor="middle" font-weight="normal">马台山周绳</text>
<text x="160" y="176" font-size="4.6" fill="#66676a" text-anchor="middle" font-weight="normal">上海红警桐林森</text>
<text x="160" y="182" font-size="4.6" fill="#66676a" text-anchor="middle" font-weight="normal">灵芝酒西店</text>
<text x="167" y="194.5" font-size="4.6" fill="#66676a" text-anchor="middle" font-weight="normal">金润汽车生活馆</text>
<text x="163" y="206" font-size="4.6" fill="#66676a" text-anchor="middle" font-weight="normal">鑫广汽车维理厂</text>
<text x="178" y="231.5" font-size="5.8" fill="#a9aaac" text-anchor="middle" font-weight="normal">上海邦途汽车</text>
<text x="178" y="239" font-size="5.8" fill="#a9aaac" text-anchor="middle" font-weight="normal">服务有限公司</text>
<text x="203" y="208.5" font-size="4.6" fill="#66676a" text-anchor="end" font-weight="normal">上海兴达恒置</text>
<text x="203" y="214.5" font-size="4.6" fill="#66676a" text-anchor="end" font-weight="normal">销售有限公司</text>
<text x="196" y="108.5" font-size="4.6" fill="#66676a" text-anchor="middle" font-weight="normal">宇通客运上海</text>
<text x="196" y="114.5" font-size="4.6" fill="#66676a" text-anchor="middle" font-weight="normal">销售服务中心</text>
<text x="199" y="74.5" font-size="4.6" fill="#66676a" text-anchor="middle" font-weight="normal">金好餐饮</text>
<text x="213" y="34" font-size="4.6" fill="#66676a" text-anchor="middle" font-weight="normal">祁连山南路</text>
<text x="563" y="39.5" font-size="4.6" fill="#66676a" text-anchor="middle" font-weight="normal">清新农贸市场</text>
<text x="637" y="31.5" font-size="4.6" fill="#66676a" text-anchor="middle" font-weight="normal">上海设计</text>
<text x="637" y="36.5" font-size="4.6" fill="#66676a" text-anchor="middle" font-weight="normal">时代创意</text>
<text x="698" y="35.5" font-size="4.6" fill="#66676a" text-anchor="middle" font-weight="normal">泰源景都二期</text>
<text x="605" y="47" font-size="4.6" fill="#66676a" text-anchor="start" font-weight="normal">东香名同导</text>
<text x="22" y="36" font-size="4.2" fill="#a9aaac" text-anchor="middle" font-weight="normal">11幢</text>
<text x="86" y="30" font-size="4.2" fill="#a9aaac" text-anchor="middle" font-weight="normal">3幢</text>
<text x="470" y="36" font-size="4.2" fill="#a9aaac" text-anchor="middle" font-weight="normal">11幢</text>
<text x="560" y="36" font-size="4.2" fill="#a9aaac" text-anchor="middle" font-weight="normal">21号</text>
<text x="770" y="44" font-size="4.2" fill="#a9aaac" text-anchor="middle" font-weight="normal">6幢</text>
<text x="12" y="296" font-size="4.4" fill="#a9aaac" text-anchor="middle" font-weight="normal">23幢</text>
<text x="44" y="291" font-size="4.4" fill="#a9aaac" text-anchor="middle" font-weight="normal">23幢</text>
<text x="100" y="301" font-size="4.4" fill="#a9aaac" text-anchor="middle" font-weight="normal">14幢</text>
<text x="190" y="295" font-size="4.4" fill="#a9aaac" text-anchor="middle" font-weight="normal">5号楼</text>
<text x="100" y="426" font-size="4.4" fill="#a9aaac" text-anchor="middle" font-weight="normal">17幢</text>
<text x="116" y="439" font-size="4.4" fill="#a9aaac" text-anchor="middle" font-weight="normal">15幢</text>
<text x="86" y="450" font-size="4.4" fill="#a9aaac" text-anchor="middle" font-weight="normal">23幢</text>
<text x="148" y="436" font-size="4.4" fill="#a9aaac" text-anchor="middle" font-weight="normal">万镇东苑</text>
<text x="148" y="441.5" font-size="4.4" fill="#a9aaac" text-anchor="middle" font-weight="normal">六苑13弄</text>
<text x="644" y="130" font-size="4.8" fill="#8d8d90" text-anchor="middle" font-weight="normal">康居家苑</text>
<text x="627" y="48" font-size="4.4" fill="#66676a" text-anchor="start" font-weight="normal">中山幕波</text>
<text x="0" y="56" font-size="4.6" fill="#66676a" text-anchor="start" font-weight="normal">建一</text>
<text x="0" y="76" font-size="4.6" fill="#66676a" text-anchor="start" font-weight="normal">镇建</text>
<text x="0" y="102" font-size="4.6" fill="#66676a" text-anchor="start" font-weight="normal">上海汇金商厦</text>
<text x="0" y="108" font-size="4.6" fill="#66676a" text-anchor="start" font-weight="normal">有限公司</text>
<text x="829" y="389" font-size="4.6" fill="#66676a" text-anchor="end" font-weight="normal">老陶</text>
<text x="829" y="396" font-size="4.6" fill="#66676a" text-anchor="end" font-weight="normal">灵工</text>
<text x="829" y="307" font-size="4.6" fill="#66676a" text-anchor="end" font-weight="normal">海</text>
<text x="318" y="83" font-size="4.6" fill="#5a5b5e" text-anchor="middle" font-weight="normal">新长征花苑</text>
<text x="498" y="84" font-size="4.6" fill="#5a5b5e" text-anchor="middle" font-weight="normal">新长征花园</text>
<text x="498" y="90" font-size="4.6" fill="#5a5b5e" text-anchor="middle" font-weight="normal">小区</text>
<text x="530" y="86" font-size="4.6" fill="#5a5b5e" text-anchor="start" font-weight="normal">清峪路54号</text>
<text x="548" y="109" font-size="4.6" fill="#5a5b5e" text-anchor="middle" font-weight="normal">清峪路11弄-15号</text>
<text x="370" y="129" font-size="4.6" fill="#5a5b5e" text-anchor="middle" font-weight="normal">上海广汇东风汽车</text>
<text x="370" y="135" font-size="4.6" fill="#5a5b5e" text-anchor="middle" font-weight="normal">销售服务有限公司</text>
<text x="318" y="124" font-size="4.6" fill="#5a5b5e" text-anchor="middle" font-weight="normal">万镇二车库</text>
<text x="238" y="131" font-size="4.6" fill="#5a5b5e" text-anchor="middle" font-weight="normal">金山工业园</text>
<text x="238" y="137" font-size="4.6" fill="#5a5b5e" text-anchor="middle" font-weight="normal">宿舍楼</text>
<text x="266" y="156" font-size="5.6" fill="#a9aaac" text-anchor="middle" font-weight="normal">长征金汇工业园</text>
<text x="250" y="146" font-size="4.6" fill="#5a5b5e" text-anchor="middle" font-weight="normal">国创资质</text>
<text x="440" y="150" font-size="4.6" fill="#5a5b5e" text-anchor="middle" font-weight="normal">服务有限公司</text>
<text x="268" y="72" font-size="4.6" fill="#5a5b5e" text-anchor="middle" font-weight="normal">第一秋冬</text>
<text x="240" y="95" font-size="4.6" fill="#5a5b5e" text-anchor="middle" font-weight="normal">西口国际公寓</text>
<text x="335" y="251" font-size="4.6" fill="#5a5b5e" text-anchor="middle" font-weight="normal">上海公园和粤汽车</text>
<text x="335" y="257" font-size="4.6" fill="#5a5b5e" text-anchor="middle" font-weight="normal">销售有限公司</text>
<text x="345" y="267" font-size="4.6" fill="#5a5b5e" text-anchor="middle" font-weight="normal">长征镇社区卫生</text>
<text x="345" y="273" font-size="4.6" fill="#5a5b5e" text-anchor="middle" font-weight="normal">服务中心田林部</text>
<text x="255" y="275" font-size="4.6" fill="#5a5b5e" text-anchor="middle" font-weight="normal">同普路1273弄</text>
<text x="390" y="278" font-size="4.6" fill="#5a5b5e" text-anchor="middle" font-weight="normal">同普大厦</text>
<text x="560" y="251" font-size="5.8" fill="#a9aaac" text-anchor="middle" font-weight="normal">上海美达净</text>
<text x="560" y="258" font-size="5.8" fill="#a9aaac" text-anchor="middle" font-weight="normal">日化有限公司</text>
<text x="588" y="278" font-size="4.6" fill="#5a5b5e" text-anchor="middle" font-weight="normal">上海歌城</text>
<text x="598" y="228" font-size="4.6" fill="#5a5b5e" text-anchor="middle" font-weight="normal">德蒙人爱国连锁</text>
<text x="598" y="234" font-size="4.6" fill="#5a5b5e" text-anchor="middle" font-weight="normal">超市国泰店</text>
<text x="604" y="220" font-size="4.6" fill="#5a5b5e" text-anchor="start" font-weight="normal">金祁路</text>
<text x="280" y="210" font-size="4.6" fill="#5a5b5e" text-anchor="middle" font-weight="normal">长征金江</text>
<text x="280" y="216" font-size="4.6" fill="#5a5b5e" text-anchor="middle" font-weight="normal">工业园10幢</text>
<text x="300" y="226" font-size="4.6" fill="#5a5b5e" text-anchor="middle" font-weight="normal">长征金江</text>
<text x="300" y="232" font-size="4.6" fill="#5a5b5e" text-anchor="middle" font-weight="normal">工业园2幢</text>
<text x="420" y="200" font-size="5.6" fill="#a9aaac" text-anchor="middle" font-weight="normal">华美达广场</text>
<text x="452" y="240" font-size="4.6" fill="#5a5b5e" text-anchor="middle" font-weight="normal">朗诗绿色</text>
<text x="452" y="246" font-size="4.6" fill="#5a5b5e" text-anchor="middle" font-weight="normal">街区</text>
<text x="500" y="236" font-size="4.6" fill="#5a5b5e" text-anchor="middle" font-weight="normal">金润</text>
<text x="500" y="242" font-size="4.6" fill="#5a5b5e" text-anchor="middle" font-weight="normal">花园</text>
<text x="113" y="98" font-size="4.6" fill="#5a5b5e" text-anchor="middle" font-weight="normal">长江镇未来</text>
<text x="113" y="104" font-size="4.6" fill="#5a5b5e" text-anchor="middle" font-weight="normal">街区居委会</text>
<text x="78" y="119" font-size="4.6" fill="#5a5b5e" text-anchor="middle" font-weight="normal">金山月星家居</text>
<text x="82" y="125" font-size="4.6" fill="#5a5b5e" text-anchor="middle" font-weight="normal">一号之家</text>
<text x="128" y="122" font-size="4.6" fill="#5a5b5e" text-anchor="middle" font-weight="normal">Foxuge</text>
<text x="128" y="128" font-size="4.6" fill="#5a5b5e" text-anchor="middle" font-weight="normal">建设工作室</text>
<text x="40" y="170" font-size="4.6" fill="#5a5b5e" text-anchor="middle" font-weight="normal">金沙雅苑</text>
<text x="60" y="200" font-size="5.6" fill="#a9aaac" text-anchor="middle" font-weight="normal">新苑小区</text>
<text x="70" y="225" font-size="4.6" fill="#5a5b5e" text-anchor="middle" font-weight="normal">麦当劳</text>
<text x="50" y="245" font-size="4.6" fill="#5a5b5e" text-anchor="middle" font-weight="normal">宝华大厦</text>
<text x="722" y="191" font-size="4.6" fill="#5a5b5e" text-anchor="middle" font-weight="normal">绿洲中环</text>
<text x="722" y="197" font-size="4.6" fill="#5a5b5e" text-anchor="middle" font-weight="normal">中心5号楼</text>
<text x="730" y="208" font-size="4.6" fill="#5a5b5e" text-anchor="middle" font-weight="normal">绿洲健身</text>
<text x="730" y="214" font-size="4.6" fill="#5a5b5e" text-anchor="middle" font-weight="normal">管理中心</text>
<text x="707" y="222" font-size="4.6" fill="#5a5b5e" text-anchor="middle" font-weight="normal">中通快递</text>
<text x="770" y="204" font-size="4.6" fill="#5a5b5e" text-anchor="middle" font-weight="normal">金家巷鱼店</text>
<text x="780" y="179" font-size="4.6" fill="#5a5b5e" text-anchor="middle" font-weight="normal">卓越地产招聘</text>
<text x="780" y="186" font-size="4.6" fill="#5a5b5e" text-anchor="middle" font-weight="normal">中环中心拓展处</text>
<text x="810" y="191" font-size="4.6" fill="#5a5b5e" text-anchor="start" font-weight="normal">绿洲中环</text>
<text x="810" y="197" font-size="4.6" fill="#5a5b5e" text-anchor="start" font-weight="normal">D15号楼</text>
<text x="737" y="231" font-size="4.6" fill="#5a5b5e" text-anchor="middle" font-weight="normal">绿洲中环中心</text>
<text x="775" y="150" font-size="5.6" fill="#a9aaac" text-anchor="middle" font-weight="normal">绿洲湖畔花园</text>
<text x="760" y="120" font-size="4.8" fill="#5a5b5e" text-anchor="middle" font-weight="normal">虹桥新城</text>
<text x="700" y="150" font-size="4.8" fill="#5a5b5e" text-anchor="middle" font-weight="normal">康居家苑</text>
<text x="148" y="356" font-size="4.6" fill="#6a6a6c" text-anchor="middle" font-weight="normal" transform="rotate(31 148 356)">云岭西路</text>
<text x="290" y="448" font-size="4.6" fill="#6a6a6c" text-anchor="middle" font-weight="normal" transform="rotate(31 290 448)">云岭东路</text>
<text x="233" y="455" font-size="4.4" fill="#6a6a6c" text-anchor="middle" font-weight="normal" transform="rotate(-65 233 455)">祁连山路</text>
<text x="551" y="412" font-size="4.6" fill="#6a6a6c" text-anchor="middle" font-weight="normal" transform="rotate(30 551 412)">同普路</text>
<text x="606" y="438" font-size="4.6" fill="#6a6a6c" text-anchor="middle" font-weight="normal" transform="rotate(30 606 438)">同普路</text>
<text x="741" y="322" font-size="4.6" fill="#6a5a30" text-anchor="middle" font-weight="normal" transform="rotate(-58 741 322)">真北路</text>
<text x="716" y="398" font-size="4.6" fill="#6a5a30" text-anchor="middle" font-weight="normal" transform="rotate(-66 716 398)">中环路</text>
<text x="694" y="450" font-size="4.6" fill="#6a5a30" text-anchor="middle" font-weight="normal" transform="rotate(-72 694 450)">中环路</text>
<text x="734" y="385" font-size="4.4" fill="#6a6a6c" text-anchor="middle" font-weight="normal" transform="rotate(-66 734 385)">真北路</text>
<text x="621" y="35" font-size="4.4" fill="#6a6a6c" text-anchor="middle" font-weight="normal" transform="rotate(-55 621 35)">双白路</text>
<text x="252" y="46" font-size="4.4" fill="#6a6a6c" text-anchor="middle" font-weight="normal" transform="rotate(28 252 46)">金沙江路</text>
<circle cx="212" cy="24.8" r="2.4" fill="#fff" stroke="#e0454f" stroke-width="0.9"/>
<g opacity="0.6" fill="#c9c9c9" stroke="#a2a2a2" stroke-width="0.7"><circle cx="675" cy="414" r="4.4"/><rect x="673.7" y="418.2" width="2.6" height="10.4"/><path d="M680,416.5 l9.6,8.6 -2.2,2.2 -9.2,-8.2z"/></g>
<text x="692.8" y="418" font-size="9.1" fill="#a9abae" opacity="0.9">激活 Windows</text>
<text x="692.8" y="426.6" font-size="6.1" fill="#a9abae" opacity="0.9">转到"操作中心"以激活 Windows。</text></svg>
<div id="topbar"></div>
<div id="topline"></div><div id="tabline"></div>
<svg id="trap" width="829" height="34" viewBox="0 0 829 34"><defs><linearGradient id="tg" x1="0" y1="0" x2="0" y2="1"><stop offset="0" stop-color="#0c1d33"/><stop offset="0.85" stop-color="#102740"/><stop offset="1" stop-color="#12506a"/></linearGradient></defs><polygon points="307.5,0.8 514,0.8 501,32 321.5,32" fill="url(#tg)"/><polyline points="307.5,0.8 321.5,32 501,32 514,0.8" fill="none" stroke="rgba(30,110,130,.55)" stroke-width="0.8"/></svg>
<div class="tab" style="left:27.9px">实时监控</div>
<div class="tab on" style="left:95.8px">快捷操作</div>
<div class="tab" style="left:163.4px">运维平台</div>
<div id="proj">所属项目:【演示专用项目1】</div>
<div class="panel" id="pl"></div>
<svg class="abs" style="left:25.4px;top:56.6px" width="10.4" height="10" viewBox="0 0 20.8 20"><g fill="none" stroke="#f2f4f7" stroke-width="1.5"><rect x="2.2" y="8" width="4" height="9.5"/><rect x="8.2" y="1.5" width="4.4" height="16"/><rect x="14.6" y="5.2" width="4" height="12.3"/><path d="M0,19 H20.8"/></g></svg>
<div class="ptitle" style="left:38.3px;top:59.6px;">数量统计</div>
<div class="up" style="left:129.7px;top:56.2px"><svg width="12.6" height="12.6" viewBox="0 0 12.6 12.6" style="position:absolute;left:0;top:0"><path d="M3.4,7.5 L6.3,4.7 L9.2,7.5" fill="none" stroke="#fff" stroke-width="1.3" stroke-linecap="round" stroke-linejoin="round"/></svg></div>
<div class="hr" style="left:24.8px;top:79.8px;width:117.8px"></div>
<div class="t6" style="left:25px;top:95.3px;">智慧照明总数（台）</div>
<div class="t6" style="left:109px;top:95.3px;width:12px;text-align:center;font-weight:bold;">1</div>
<div class="t6" style="left:25px;top:118.61px;">显示屏总数（台）</div>
<div class="t6" style="left:109px;top:118.61px;width:12px;text-align:center;font-weight:bold;">0</div>
<div class="t6" style="left:25px;top:141.92px;">视频监控总数（台）</div>
<div class="t6" style="left:109px;top:141.92px;width:12px;text-align:center;font-weight:bold;">0</div>
<div class="t6" style="left:25px;top:165.23px;">WIFI总数（台）</div>
<div class="t6" style="left:109px;top:165.23px;width:12px;text-align:center;font-weight:bold;">1</div>
<div class="t6" style="left:25px;top:188.54px;">环境检测总数（台）</div>
<div class="t6" style="left:109px;top:188.54px;width:12px;text-align:center;font-weight:bold;">0</div>
<div class="t6" style="left:25px;top:211.85px;">一键呼叫总数（台）</div>
<div class="t6" style="left:109px;top:211.85px;width:12px;text-align:center;font-weight:bold;">3</div>
<div class="t6" style="left:25px;top:235.16px;">广播总数（台）</div>
<div class="t6" style="left:109px;top:235.16px;width:12px;text-align:center;font-weight:bold;">0</div>
<div class="t6" style="left:25px;top:258.47px;">井盖总数（台）</div>
<div class="t6" style="left:109px;top:258.47px;width:12px;text-align:center;font-weight:bold;">0</div>
<div class="panel" id="pc"></div>
<svg class="abs" style="left:430px;top:205px" width="30" height="50" viewBox="430 205 30 50"><g fill="#294866" stroke="none" opacity="0.85"><rect x="443.2" y="210" width="1.7" height="42"/><path d="M443.5,212 L451.5,208.2 L452.3,209.8 L444.6,214 Z"/><rect x="434" y="226.3" width="9.6" height="14" rx="0.8"/><rect x="444.6" y="219" width="2" height="2.4"/></g></svg>
<div class="abs" style="left:314.5px;top:59.5px;width:200px;height:10px;line-height:10px;font-size:7.7px;text-align:center;color:#f3f5f8;white-space:nowrap">灯杆demo1（模拟）</div>
<svg class="abs" style="left:600.6px;top:54.6px" width="8" height="8" viewBox="0 0 8 8"><path d="M1.2,1 L6.6,7 M6.6,1 L1.2,7" stroke="#fff" stroke-width="1.05" fill="none"/></svg>
<div class="hr" style="left:226px;top:79.6px;width:379.5px"></div>
<svg class="ic" style="left:225.6px" viewBox="0 0 20 20"><circle cx="10" cy="10" r="10" fill="#14d6cf"/><g fill="none" stroke="#fff" stroke-width="0.8" stroke-linecap="round"><path d="M7.9,13.2 C7.9,11.6 6.4,10.9 6.4,8.9 A3.6,3.6 0 0 1 13.6,8.9 C13.6,10.9 12.1,11.6 12.1,13.2 Z"/><path d="M8.3,14.4 H11.7 M8.8,15.6 H11.2"/><path d="M8.9,9.2 L10,10.6 L11.1,9.2 M10,10.6 V13"/><path d="M10,3 V4.2 M5.2,5 L6,5.9 M14.8,5 L14,5.9 M3.9,8.8 H5 M15,8.8 H16.1"/></g></svg>
<svg class="ic" style="left:258.66px" viewBox="0 0 20 20"><circle cx="10" cy="10" r="10" fill="#fff"/><g fill="none" stroke="#1f3555" stroke-width="0.9" stroke-linejoin="round"><rect x="4.3" y="5.4" width="11.4" height="7.4"/><path d="M10,12.8 V14.6 M7.2,14.8 H12.8" stroke-width="1"/><path d="M5.8,11 L8,8.9 L9.6,10 L12,7.4 L13,8 L14.4,6.8" stroke-width="0.75"/></g></svg>
<svg class="ic" style="left:291.72px" viewBox="0 0 20 20"><circle cx="10" cy="10" r="10" fill="#fff"/><g fill="none" stroke="#1f3555" stroke-width="0.9"><circle cx="10" cy="9" r="4.2"/><circle cx="10" cy="9" r="2"/><circle cx="10" cy="9" r="0.6" fill="#1f3555"/><path d="M7.8,12.7 L6.6,15 H13.4 L12.2,12.7 M6,15.3 H14" stroke-linejoin="round"/></g></svg>
<svg class="ic" style="left:324.78px" viewBox="0 0 20 20"><circle cx="10" cy="10" r="10" fill="#fff"/><g fill="none" stroke="#1f3555" stroke-width="1.15" stroke-linecap="round"><path d="M4.7,8.4 A7.6,7.6 0 0 1 15.3,8.4"/><path d="M6.5,10.5 A5,5 0 0 1 13.5,10.5"/><path d="M8.3,12.5 A2.5,2.5 0 0 1 11.7,12.5"/><circle cx="10" cy="14.5" r="0.55" fill="#1f3555" stroke-width="0.6"/></g></svg>
<svg class="ic" style="left:357.84px" viewBox="0 0 20 20"><circle cx="10" cy="10" r="10" fill="#fff"/><g fill="none" stroke="#1f3555" stroke-width="0.9" stroke-linejoin="round" stroke-linecap="round"><path d="M10,4.6 C13,7 14.6,9.4 14.6,11.6 A4.6,4.6 0 0 1 5.4,11.6 C5.4,9.4 7,7 10,4.6 Z"/><path d="M10,8 V16 M10,11 L8.2,9.4 M10,12.8 L12,11"/></g></svg>
<svg class="ic" style="left:390.9px" viewBox="0 0 20 20"><circle cx="10" cy="10" r="10" fill="#fff"/><g fill="none" stroke="#1f3555" stroke-width="0.9" stroke-linejoin="round" stroke-linecap="round"><path d="M6.2,5.6 L7.6,4.8 L9.2,7.4 L8.2,8.4 C8.8,10 10.2,11.6 11.8,12.4 L12.9,11.4 L15.3,13.2 L14.4,14.6 C13.6,15.4 11.2,14.6 9,12.4 C6.8,10.2 5.4,7 6.2,5.6 Z"/><path d="M11.2,6.6 A2.4,2.4 0 0 1 13.4,8.8 M11.4,4.6 A4.4,4.4 0 0 1 15.4,8.6" stroke-width="0.8"/></g></svg>
<svg class="ic" style="left:423.96px" viewBox="0 0 20 20"><circle cx="10" cy="10" r="10" fill="#fff"/><g fill="none" stroke="#1f3555" stroke-width="0.9" stroke-linejoin="round"><path d="M5,8.4 L11.6,6.2 V12.6 L5,10.6 Z"/><ellipse cx="12.6" cy="9.2" rx="1.9" ry="3.9"/><path d="M6.6,11.1 V14.6 H8.4 V11.6"/><path d="M4.2,8.6 V10.4" stroke-width="1.2"/></g></svg>
<svg class="ic" style="left:457.02px" viewBox="0 0 20 20"><circle cx="10" cy="10" r="10" fill="#fff"/><g><circle cx="10" cy="10" r="5.25" fill="#1f3555"/><g fill="none" stroke="#fff"><circle cx="10" cy="10" r="4.3" stroke-width="0.8" stroke-dasharray="0.7 0.9"/><circle cx="10" cy="10" r="3.1" stroke-width="0.7" stroke-dasharray="0.6 0.8" stroke-dashoffset="0.5"/><path d="M10,4.8 V15.2 M4.8,10 H15.2 M6.3,6.3 L13.7,13.7 M13.7,6.3 L6.3,13.7" stroke-width="0.35" opacity="0.7"/></g><circle cx="10" cy="10" r="1.9" fill="#fff"/><path d="M9.4,9.2 V10.8 M9.4,10 L10.8,10" stroke="#1f3555" stroke-width="0.55" fill="none"/></g></svg>
<svg class="ic" style="left:490.08px" viewBox="0 0 20 20"><circle cx="10" cy="10" r="10" fill="#fff"/><g><path d="M10,5.1 C12.4,5.1 13.2,7 13.2,8.7 C13.2,10.5 12,11.9 11.1,12.4 V13.4 H8.9 V12.4 C8,11.9 6.8,10.5 6.8,8.7 C6.8,7 7.6,5.1 10,5.1 Z" fill="#050608"/><g fill="none" stroke="#555" stroke-width="0.8"><path d="M5.2,7 V5 H7.2 M12.8,5 H14.8 V7" stroke="#777"/><path d="M5.2,13 V15 H7.4 M12.6,15 H14.8 V13" stroke="#444"/><path d="M5.4,13.9 H8.4 L10,13.2 L11.6,13.9 H14.6" stroke-width="0.7" stroke="#555"/></g></g></svg>
<div class="t6 b" style="left:225.8px;top:140.3px;">调光:</div>
<div class="abs" style="left:251.4px;top:140.8px;width:322.2px;height:6.9px;border-radius:2px;background:#fdfdfd"></div>
<div class="abs" style="left:251.5px;top:138.7px;width:12.9px;height:10.3px;border-radius:1.5px;background:#fff;box-shadow:0 0.6px 1.4px rgba(0,0,0,.5)"><div class="abs" style="left:6.1px;top:3.2px;width:0.7px;height:4px;background:#dcdfe4"></div></div>
<div class="t6 b" style="left:225.8px;top:164.1px;">回路:</div>
<div class="ck" style="left:257px"><svg width="5.6" height="5.6" viewBox="0 0 5.6 5.6"><path d="M1.2,2.9 L2.4,4.1 L4.5,1.6" fill="none" stroke="#fff" stroke-width="0.9"/></svg></div>
<div class="t6 b" style="left:264.8px;top:164.1px;">第1回路</div>
<div class="ck" style="left:290px"><svg width="5.6" height="5.6" viewBox="0 0 5.6 5.6"><path d="M1.2,2.9 L2.4,4.1 L4.5,1.6" fill="none" stroke="#fff" stroke-width="0.9"/></svg></div>
<div class="t6 b" style="left:297.8px;top:164.1px;">第2回路</div>
<div class="ck" style="left:323px"><svg width="5.6" height="5.6" viewBox="0 0 5.6 5.6"><path d="M1.2,2.9 L2.4,4.1 L4.5,1.6" fill="none" stroke="#fff" stroke-width="0.9"/></svg></div>
<div class="t6 b" style="left:330.8px;top:164.1px;">第3回路</div>
<div class="ck" style="left:356px"><svg width="5.6" height="5.6" viewBox="0 0 5.6 5.6"><path d="M1.2,2.9 L2.4,4.1 L4.5,1.6" fill="none" stroke="#fff" stroke-width="0.9"/></svg></div>
<div class="t6 b" style="left:363.8px;top:164.1px;">第4回路</div>
<div class="ck" style="left:389px"><svg width="5.6" height="5.6" viewBox="0 0 5.6 5.6"><path d="M1.2,2.9 L2.4,4.1 L4.5,1.6" fill="none" stroke="#fff" stroke-width="0.9"/></svg></div>
<div class="t6 b" style="left:396.8px;top:164.1px;">第5回路</div>
<div class="ck" style="left:422px"><svg width="5.6" height="5.6" viewBox="0 0 5.6 5.6"><path d="M1.2,2.9 L2.4,4.1 L4.5,1.6" fill="none" stroke="#fff" stroke-width="0.9"/></svg></div>
<div class="t6 b" style="left:429.8px;top:164.1px;">第6回路</div>
<div class="t6 b" style="left:225.8px;top:186.6px;">控制:</div>
<div class="gbtn" style="left:257.6px">开灯</div>
<div class="gbtn" style="left:289.05px">关灯</div>
<div class="gbtn" style="left:320.5px">取消</div>
<div class="gbtn" style="left:351.95px">获取</div>
<div class="hr" style="left:226px;top:215.9px;width:379.5px"></div>
<div class="t6 b" style="left:226px;top:224px;">编号：22</div>
<div class="t6 b" style="left:226px;top:233.4px;">状态：关闭</div>
<div class="t6 b" style="left:226px;top:241.3px;">电压A：0</div>
<div class="t6 b" style="left:226px;top:248.9px;">电流A：0</div>
<div class="t6 b" style="left:226px;top:256.6px;">更新结果:</div>
<div class="t6 b" style="left:352.5px;top:224px;">在线：</div>
<div class="t6 b" style="left:352.5px;top:233.4px;">总功率:</div>
<div class="t6 b" style="left:352.5px;top:241.3px;">电压B：0</div>
<div class="t6 b" style="left:352.5px;top:248.9px;">电流B：0</div>
<div class="t6 b" style="left:352.5px;top:256.6px;">更新时间:</div>
<div class="t6 b" style="left:478.9px;top:224px;">回路:</div>
<div class="t6 b" style="left:478.9px;top:233.4px;">总电能:</div>
<div class="t6 b" style="left:478.9px;top:241.3px;">电压C：0</div>
<div class="t6 b" style="left:478.9px;top:248.9px;">电流C：0</div>
<div class="t6 b" style="left:478.9px;top:256.6px;">地址：null</div>
<div class="abs" style="left:370.3px;top:224.2px;width:7.8px;height:7.8px;border-radius:50%;background:radial-gradient(circle at 40% 35%,#fff7a8 0%,#f3d52e 35%,#c9a312 100%)"></div>
<div class="panel" id="pr"></div>
<svg class="abs" style="left:672.2px;top:57.2px" width="10.4" height="10" viewBox="0 0 20.8 20"><g fill="none" stroke="#f2f4f7" stroke-width="1.5"><rect x="2.2" y="8" width="4" height="9.5"/><rect x="8.2" y="1.5" width="4.4" height="16"/><rect x="14.6" y="5.2" width="4" height="12.3"/><path d="M0,19 H20.8"/></g></svg>
<div class="ptitle" style="left:686.4px;top:59.9px;">数量统计</div>
<div class="up" style="left:790.6px;top:56.3px"><svg width="12.6" height="12.6" viewBox="0 0 12.6 12.6" style="position:absolute;left:0;top:0"><path d="M3.4,7.5 L6.3,4.7 L9.2,7.5" fill="none" stroke="#fff" stroke-width="1.3" stroke-linecap="round" stroke-linejoin="round"/></svg></div>
<div class="hr" style="left:672.2px;top:79.6px;width:133.8px"></div>
<div class="t6" style="left:672.2px;top:87.8px;">电流电压</div>
<div class="t6" style="left:706px;width:100px;text-align:right;top:87.8px;color:#a9b4c3;font-size:5.2px">近7天电流电压记录</div>
<svg class="abs" style="left:664px;top:48px" width="150" height="192" viewBox="664 48 150 192"><path d="M685,103.8 H693.8" stroke="#5b9cf0" stroke-width="0.8"/><circle cx="689.4" cy="103.8" r="1.9" fill="#fff" stroke="#5b9cf0" stroke-width="0.8"/><path d="M713.6,103.8 H722.4" stroke="#53c27c" stroke-width="0.8"/><circle cx="718" cy="103.8" r="1.9" fill="#fff" stroke="#53c27c" stroke-width="0.8"/><path d="M741.4,103.8 H750.2" stroke="#ee6666" stroke-width="0.8"/><circle cx="745.8" cy="103.8" r="1.9" fill="#fff" stroke="#ee6666" stroke-width="0.8"/><path d="M769.6,103.8 H778.4" stroke="#e3a66a" stroke-width="0.8"/><circle cx="774" cy="103.8" r="1.9" fill="#fff" stroke="#e3a66a" stroke-width="0.8"/><path d="M685,112.6 H693.8" stroke="#e8d3a4" stroke-width="0.8"/><circle cx="689.4" cy="112.6" r="1.9" fill="#fff" stroke="#e8d3a4" stroke-width="0.8"/><path d="M713.6,112.6 H722.4" stroke="#a04fd0" stroke-width="0.8"/><circle cx="718" cy="112.6" r="1.9" fill="#fff" stroke="#a04fd0" stroke-width="0.8"/><path d="M682.3,129.8 V220.4 H795" fill="none" stroke="#d5dae2" stroke-width="0.9"/><path d="M682.5,220.4 V222" stroke="#d5dae2" stroke-width="0.8"/><path d="M720.4,220.4 V222" stroke="#d5dae2" stroke-width="0.8"/><path d="M757.5,220.4 V222" stroke="#d5dae2" stroke-width="0.8"/><path d="M795,220.4 V222" stroke="#d5dae2" stroke-width="0.8"/></svg>
<div class="lg" style="left:695.6px;top:100.3px">电流A</div>
<div class="lg" style="left:724.2px;top:100.3px">电流B</div>
<div class="lg" style="left:752px;top:100.3px">电流C</div>
<div class="lg" style="left:780.2px;top:100.3px">电压A</div>
<div class="lg" style="left:695.6px;top:109.1px">电压B</div>
<div class="lg" style="left:724.2px;top:109.1px">电压C</div>
<div class="lg" style="left:675.3px;top:117.5px;font-size:4.8px">平均值</div>
<div class="xl" style="left:667.5px">2020-9-4</div>
<div class="xl" style="left:705.4px">2020-9-2</div>
<div class="xl" style="left:742.5px">2020-8-31</div>
<div class="xl" style="left:780px">2020-8-26</div>
</body></html>
